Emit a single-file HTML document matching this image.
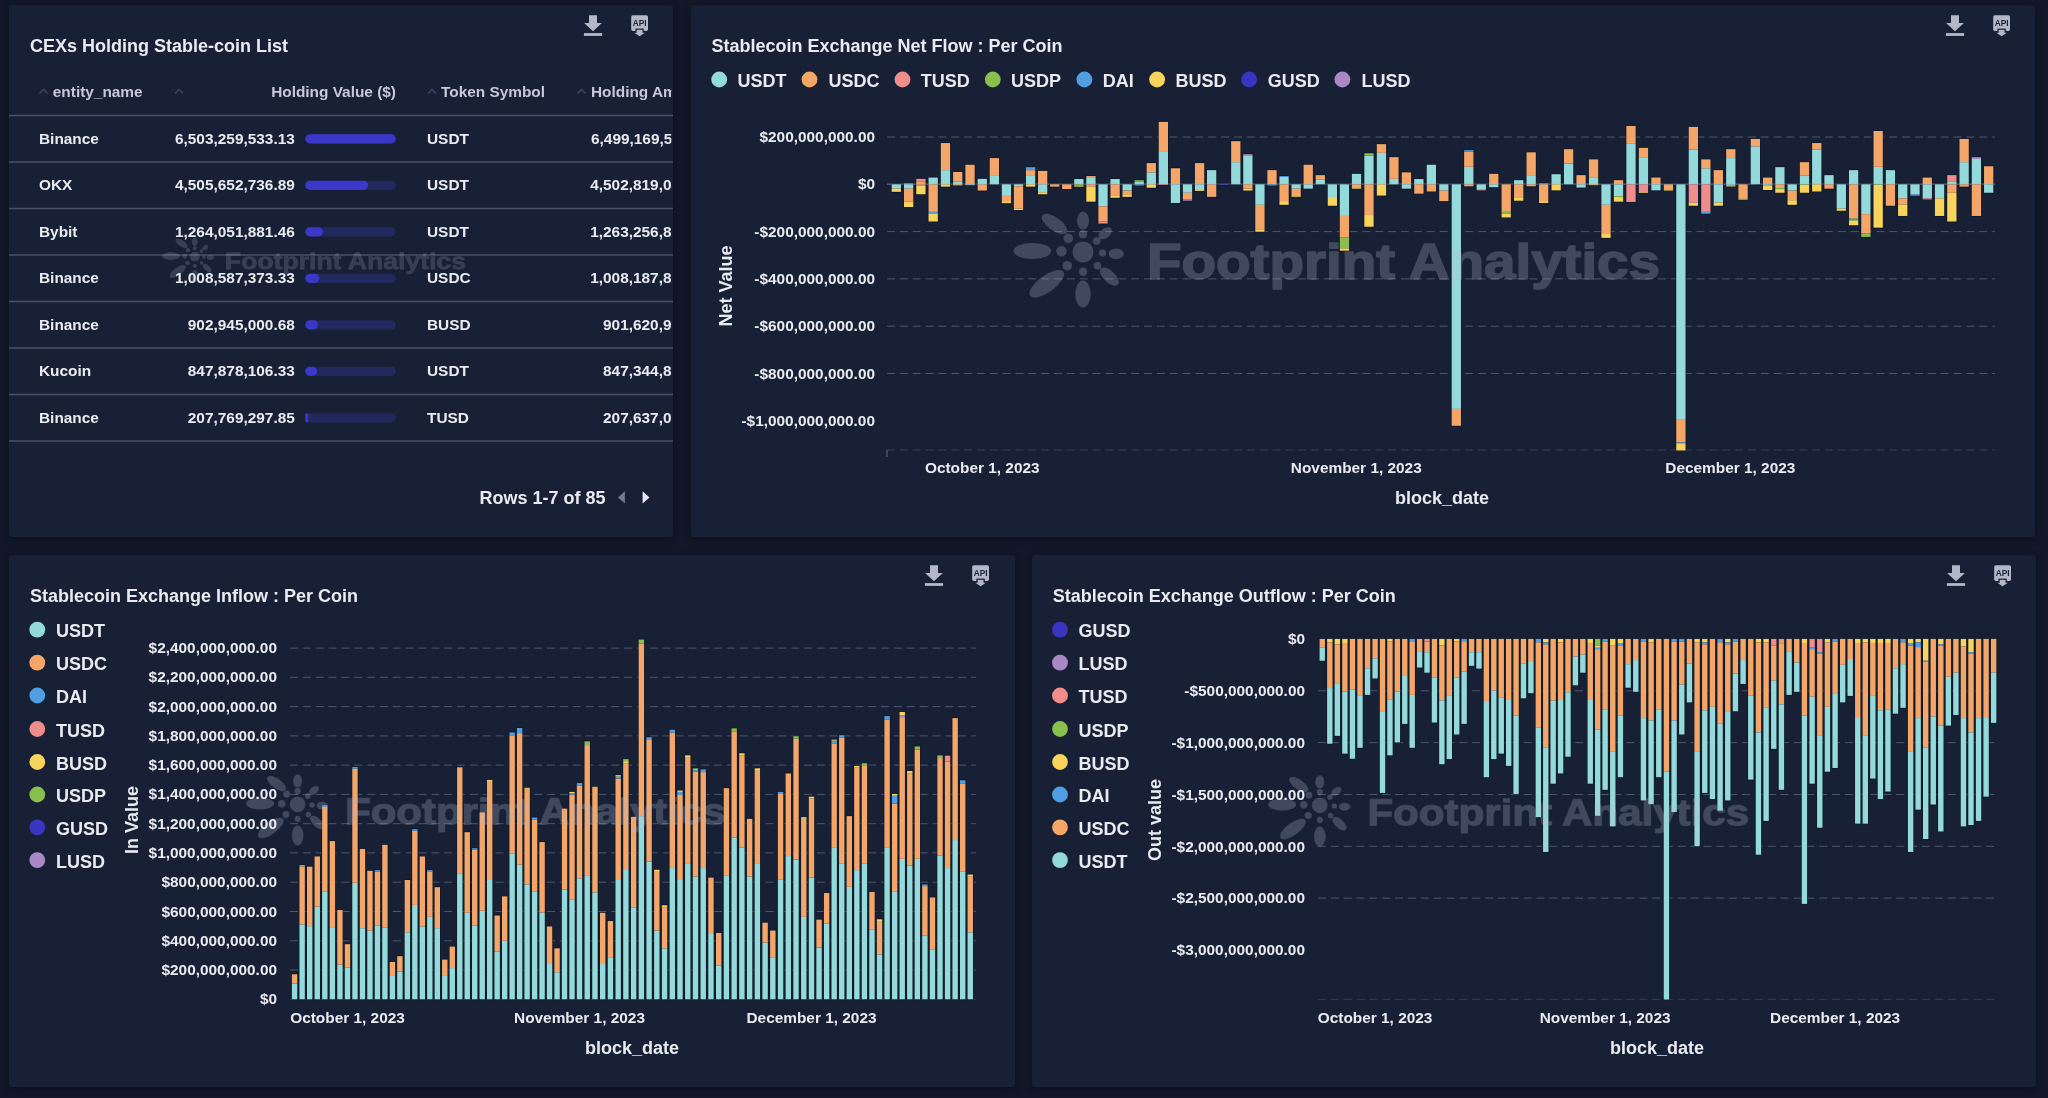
<!DOCTYPE html>
<html><head><meta charset="utf-8"><title>Stablecoin Exchange Dashboard</title>
<style>
html,body{margin:0;padding:0;background:#121829;}
body{width:2048px;height:1098px;overflow:hidden;position:relative;font-family:"Liberation Sans",sans-serif;}
.card{position:absolute;background:#182035;border-radius:3px;box-shadow:0 2px 6px rgba(8,11,22,0.6);}
svg{position:absolute;left:0;top:0;will-change:transform;}
svg text{font-family:"Liberation Sans",sans-serif;font-weight:bold;}
</style></head><body>
<div class="card" style="left:9px;top:5px;width:664px;height:532px"></div>
<div class="card" style="left:691px;top:5px;width:1344px;height:532px"></div>
<div class="card" style="left:9px;top:555px;width:1006px;height:532px"></div>
<div class="card" style="left:1032px;top:555px;width:1004px;height:532px"></div>
<svg width="2048" height="1098" viewBox="0 0 2048 1098">
<g id="table"><clipPath id="c1"><rect x="9" y="5" width="662.4" height="532"/></clipPath><g clip-path="url(#c1)"><path d="M39.5,93.5 l4,-4 l4,4" fill="none" stroke="#3A435B" stroke-width="1.7"/><path d="M175,93.5 l4,-4 l4,4" fill="none" stroke="#3A435B" stroke-width="1.7"/><path d="M428,93.5 l4,-4 l4,4" fill="none" stroke="#3A435B" stroke-width="1.7"/><path d="M577.5,93.5 l4,-4 l4,4" fill="none" stroke="#3A435B" stroke-width="1.7"/><text x="52.8" y="97" font-size="15.4" text-anchor="start" fill="#C5C9D8">entity_name</text><text x="396" y="97" font-size="15.4" text-anchor="end" fill="#C5C9D8">Holding Value ($)</text><text x="441" y="97" font-size="15.4" text-anchor="start" fill="#C5C9D8">Token Symbol</text><text x="591" y="97" font-size="15.4" text-anchor="start" fill="#C5C9D8">Holding Amount</text><text x="39" y="143.8" font-size="15.4" text-anchor="start" fill="#E9EBF1">Binance</text><text x="294.8" y="143.8" font-size="15.4" text-anchor="end" fill="#E9EBF1">6,503,259,533.13</text><rect x="305.3" y="134.2" width="90.5" height="9.2" rx="4.6" fill="#22295F"/><rect x="305.3" y="134.2" width="90.5" height="9.2" rx="4.6" fill="#3B37C9"/><text x="427" y="143.8" font-size="15.4" text-anchor="start" fill="#E9EBF1">USDT</text><text x="710" y="143.8" font-size="15.4" text-anchor="end" fill="#E9EBF1">6,499,169,577.11</text><text x="39" y="190.3" font-size="15.4" text-anchor="start" fill="#E9EBF1">OKX</text><text x="294.8" y="190.3" font-size="15.4" text-anchor="end" fill="#E9EBF1">4,505,652,736.89</text><rect x="305.3" y="180.7" width="90.5" height="9.2" rx="4.6" fill="#22295F"/><rect x="305.3" y="180.7" width="62.7" height="9.2" rx="4.6" fill="#3B37C9"/><text x="427" y="190.3" font-size="15.4" text-anchor="start" fill="#E9EBF1">USDT</text><text x="710" y="190.3" font-size="15.4" text-anchor="end" fill="#E9EBF1">4,502,819,046.72</text><text x="39" y="236.8" font-size="15.4" text-anchor="start" fill="#E9EBF1">Bybit</text><text x="294.8" y="236.8" font-size="15.4" text-anchor="end" fill="#E9EBF1">1,264,051,881.46</text><rect x="305.3" y="227.2" width="90.5" height="9.2" rx="4.6" fill="#22295F"/><rect x="305.3" y="227.2" width="17.6" height="9.2" rx="4.6" fill="#3B37C9"/><text x="427" y="236.8" font-size="15.4" text-anchor="start" fill="#E9EBF1">USDT</text><text x="710" y="236.8" font-size="15.4" text-anchor="end" fill="#E9EBF1">1,263,256,871.30</text><text x="39" y="283.3" font-size="15.4" text-anchor="start" fill="#E9EBF1">Binance</text><text x="294.8" y="283.3" font-size="15.4" text-anchor="end" fill="#E9EBF1">1,008,587,373.33</text><rect x="305.3" y="273.7" width="90.5" height="9.2" rx="4.6" fill="#22295F"/><rect x="305.3" y="273.7" width="14.0" height="9.2" rx="4.6" fill="#3B37C9"/><text x="427" y="283.3" font-size="15.4" text-anchor="start" fill="#E9EBF1">USDC</text><text x="710" y="283.3" font-size="15.4" text-anchor="end" fill="#E9EBF1">1,008,187,853.20</text><text x="39" y="329.8" font-size="15.4" text-anchor="start" fill="#E9EBF1">Binance</text><text x="294.8" y="329.8" font-size="15.4" text-anchor="end" fill="#E9EBF1">902,945,000.68</text><rect x="305.3" y="320.2" width="90.5" height="9.2" rx="4.6" fill="#22295F"/><rect x="305.3" y="320.2" width="12.6" height="9.2" rx="4.6" fill="#3B37C9"/><text x="427" y="329.8" font-size="15.4" text-anchor="start" fill="#E9EBF1">BUSD</text><text x="710" y="329.8" font-size="15.4" text-anchor="end" fill="#E9EBF1">901,620,973.41</text><text x="39" y="376.3" font-size="15.4" text-anchor="start" fill="#E9EBF1">Kucoin</text><text x="294.8" y="376.3" font-size="15.4" text-anchor="end" fill="#E9EBF1">847,878,106.33</text><rect x="305.3" y="366.7" width="90.5" height="9.2" rx="4.6" fill="#22295F"/><rect x="305.3" y="366.7" width="11.8" height="9.2" rx="4.6" fill="#3B37C9"/><text x="427" y="376.3" font-size="15.4" text-anchor="start" fill="#E9EBF1">USDT</text><text x="710" y="376.3" font-size="15.4" text-anchor="end" fill="#E9EBF1">847,344,823.55</text><text x="39" y="422.8" font-size="15.4" text-anchor="start" fill="#E9EBF1">Binance</text><text x="294.8" y="422.8" font-size="15.4" text-anchor="end" fill="#E9EBF1">207,769,297.85</text><rect x="305.3" y="413.2" width="90.5" height="9.2" rx="4.6" fill="#22295F"/><rect x="305.3" y="413.2" width="2.9" height="9.2" rx="1.4" fill="#3B37C9"/><text x="427" y="422.8" font-size="15.4" text-anchor="start" fill="#E9EBF1">TUSD</text><text x="710" y="422.8" font-size="15.4" text-anchor="end" fill="#E9EBF1">207,637,016.92</text></g><line x1="9" x2="673" y1="115.6" y2="115.6" stroke="#48516A" stroke-width="1.5"/><line x1="9" x2="673" y1="162.1" y2="162.1" stroke="#48516A" stroke-width="1.5"/><line x1="9" x2="673" y1="208.6" y2="208.6" stroke="#48516A" stroke-width="1.5"/><line x1="9" x2="673" y1="255.1" y2="255.1" stroke="#48516A" stroke-width="1.5"/><line x1="9" x2="673" y1="301.6" y2="301.6" stroke="#48516A" stroke-width="1.5"/><line x1="9" x2="673" y1="348.1" y2="348.1" stroke="#48516A" stroke-width="1.5"/><line x1="9" x2="673" y1="394.6" y2="394.6" stroke="#48516A" stroke-width="1.5"/><line x1="9" x2="673" y1="441.1" y2="441.1" stroke="#48516A" stroke-width="1.5"/><text x="479.5" y="503.8" font-size="18" text-anchor="start" fill="#E9EBF1">Rows 1-7 of 85</text><path d="M624.9,491.2 v12.4 l-6.9,-6.2 z" fill="#737B93"/><path d="M642.6,491.2 v12.4 l6.9,-6.2 z" fill="#E4E7EF"/></g>
<g id="charts"><line x1="887" y1="137.0" x2="1995" y2="137.0" stroke="#4C566D" stroke-width="1.0" stroke-dasharray="8 4.85" opacity="1"/><line x1="887" y1="184.3" x2="1995" y2="184.3" stroke="#4C566D" stroke-width="1.0" stroke-dasharray="8 4.85" opacity="1"/><line x1="887" y1="231.6" x2="1995" y2="231.6" stroke="#4C566D" stroke-width="1.0" stroke-dasharray="8 4.85" opacity="1"/><line x1="887" y1="278.9" x2="1995" y2="278.9" stroke="#4C566D" stroke-width="1.0" stroke-dasharray="8 4.85" opacity="1"/><line x1="887" y1="326.2" x2="1995" y2="326.2" stroke="#4C566D" stroke-width="1.0" stroke-dasharray="8 4.85" opacity="1"/><line x1="887" y1="373.5" x2="1995" y2="373.5" stroke="#4C566D" stroke-width="1.0" stroke-dasharray="8 4.85" opacity="1"/><line x1="887" y1="450.0" x2="1995" y2="450.0" stroke="#363F55" stroke-width="1.0" stroke-dasharray="8 4.85" opacity="1"/><line x1="887" y1="450" x2="887" y2="457" stroke="#4C566D" stroke-width="1.4"/><rect x="891.69" y="184.30" width="9.30" height="7.54" fill="none" stroke="#0B1525" stroke-width="1.5" stroke-opacity="0.75"/><rect x="903.97" y="183.49" width="9.30" height="23.56" fill="none" stroke="#0B1525" stroke-width="1.5" stroke-opacity="0.75"/><rect x="916.25" y="178.85" width="9.30" height="15.40" fill="none" stroke="#0B1525" stroke-width="1.5" stroke-opacity="0.75"/><rect x="928.53" y="177.55" width="9.30" height="43.97" fill="none" stroke="#0B1525" stroke-width="1.5" stroke-opacity="0.75"/><rect x="940.81" y="143.04" width="9.30" height="43.60" fill="none" stroke="#0B1525" stroke-width="1.5" stroke-opacity="0.75"/><rect x="953.09" y="171.99" width="9.30" height="13.36" fill="none" stroke="#0B1525" stroke-width="1.5" stroke-opacity="0.75"/><rect x="965.37" y="164.75" width="9.30" height="20.41" fill="none" stroke="#0B1525" stroke-width="1.5" stroke-opacity="0.75"/><rect x="977.65" y="178.85" width="9.30" height="11.69" fill="none" stroke="#0B1525" stroke-width="1.5" stroke-opacity="0.75"/><rect x="989.72" y="158.07" width="9.30" height="26.23" fill="none" stroke="#0B1525" stroke-width="1.5" stroke-opacity="0.75"/><rect x="1001.79" y="184.30" width="9.30" height="18.85" fill="none" stroke="#0B1525" stroke-width="1.5" stroke-opacity="0.75"/><rect x="1013.86" y="184.30" width="9.30" height="25.72" fill="none" stroke="#0B1525" stroke-width="1.5" stroke-opacity="0.75"/><rect x="1025.93" y="167.16" width="9.30" height="19.48" fill="none" stroke="#0B1525" stroke-width="1.5" stroke-opacity="0.75"/><rect x="1038.00" y="170.87" width="9.30" height="23.38" fill="none" stroke="#0B1525" stroke-width="1.5" stroke-opacity="0.75"/><rect x="1050.08" y="184.30" width="9.30" height="2.34" fill="none" stroke="#0B1525" stroke-width="1.5" stroke-opacity="0.75"/><rect x="1062.15" y="184.30" width="9.30" height="4.75" fill="none" stroke="#0B1525" stroke-width="1.5" stroke-opacity="0.75"/><rect x="1074.22" y="179.04" width="9.30" height="7.61" fill="none" stroke="#0B1525" stroke-width="1.5" stroke-opacity="0.75"/><rect x="1086.29" y="176.07" width="9.30" height="25.60" fill="none" stroke="#0B1525" stroke-width="1.5" stroke-opacity="0.75"/><rect x="1098.36" y="184.30" width="9.30" height="39.26" fill="none" stroke="#0B1525" stroke-width="1.5" stroke-opacity="0.75"/><rect x="1110.43" y="179.04" width="9.30" height="18.74" fill="none" stroke="#0B1525" stroke-width="1.5" stroke-opacity="0.75"/><rect x="1122.50" y="184.30" width="9.30" height="12.55" fill="none" stroke="#0B1525" stroke-width="1.5" stroke-opacity="0.75"/><rect x="1134.57" y="180.15" width="9.30" height="5.38" fill="none" stroke="#0B1525" stroke-width="1.5" stroke-opacity="0.75"/><rect x="1146.64" y="163.08" width="9.30" height="24.68" fill="none" stroke="#0B1525" stroke-width="1.5" stroke-opacity="0.75"/><rect x="1158.71" y="121.89" width="9.30" height="63.08" fill="none" stroke="#0B1525" stroke-width="1.5" stroke-opacity="0.75"/><rect x="1170.79" y="168.27" width="9.30" height="34.69" fill="none" stroke="#0B1525" stroke-width="1.5" stroke-opacity="0.75"/><rect x="1182.86" y="184.30" width="9.30" height="16.44" fill="none" stroke="#0B1525" stroke-width="1.5" stroke-opacity="0.75"/><rect x="1194.93" y="163.08" width="9.30" height="27.83" fill="none" stroke="#0B1525" stroke-width="1.5" stroke-opacity="0.75"/><rect x="1207.00" y="170.13" width="9.30" height="26.72" fill="none" stroke="#0B1525" stroke-width="1.5" stroke-opacity="0.75"/><rect x="1219.07" y="184.30" width="9.30" height="0.86" fill="none" stroke="#0B1525" stroke-width="1.5" stroke-opacity="0.75"/><rect x="1231.14" y="141.19" width="9.30" height="43.11" fill="none" stroke="#0B1525" stroke-width="1.5" stroke-opacity="0.75"/><rect x="1243.21" y="154.17" width="9.30" height="36.36" fill="none" stroke="#0B1525" stroke-width="1.5" stroke-opacity="0.75"/><rect x="1255.28" y="184.30" width="9.30" height="47.43" fill="none" stroke="#0B1525" stroke-width="1.5" stroke-opacity="0.75"/><rect x="1267.35" y="170.13" width="9.30" height="15.40" fill="none" stroke="#0B1525" stroke-width="1.5" stroke-opacity="0.75"/><rect x="1279.42" y="176.07" width="9.30" height="28.76" fill="none" stroke="#0B1525" stroke-width="1.5" stroke-opacity="0.75"/><rect x="1291.50" y="184.30" width="9.30" height="12.55" fill="none" stroke="#0B1525" stroke-width="1.5" stroke-opacity="0.75"/><rect x="1303.57" y="164.75" width="9.30" height="23.93" fill="none" stroke="#0B1525" stroke-width="1.5" stroke-opacity="0.75"/><rect x="1315.64" y="175.14" width="9.30" height="9.16" fill="none" stroke="#0B1525" stroke-width="1.5" stroke-opacity="0.75"/><rect x="1327.71" y="184.30" width="9.30" height="21.45" fill="none" stroke="#0B1525" stroke-width="1.5" stroke-opacity="0.75"/><rect x="1339.78" y="184.30" width="9.30" height="66.35" fill="none" stroke="#0B1525" stroke-width="1.5" stroke-opacity="0.75"/><rect x="1351.85" y="173.84" width="9.30" height="14.84" fill="none" stroke="#0B1525" stroke-width="1.5" stroke-opacity="0.75"/><rect x="1364.33" y="153.25" width="9.30" height="73.47" fill="none" stroke="#0B1525" stroke-width="1.5" stroke-opacity="0.75"/><rect x="1376.80" y="144.16" width="9.30" height="51.39" fill="none" stroke="#0B1525" stroke-width="1.5" stroke-opacity="0.75"/><rect x="1389.28" y="157.14" width="9.30" height="27.16" fill="none" stroke="#0B1525" stroke-width="1.5" stroke-opacity="0.75"/><rect x="1401.76" y="172.36" width="9.30" height="16.33" fill="none" stroke="#0B1525" stroke-width="1.5" stroke-opacity="0.75"/><rect x="1414.23" y="179.04" width="9.30" height="14.66" fill="none" stroke="#0B1525" stroke-width="1.5" stroke-opacity="0.75"/><rect x="1426.71" y="164.75" width="9.30" height="26.72" fill="none" stroke="#0B1525" stroke-width="1.5" stroke-opacity="0.75"/><rect x="1439.19" y="184.30" width="9.30" height="16.81" fill="none" stroke="#0B1525" stroke-width="1.5" stroke-opacity="0.75"/><rect x="1451.66" y="184.30" width="9.30" height="241.49" fill="none" stroke="#0B1525" stroke-width="1.5" stroke-opacity="0.75"/><rect x="1464.14" y="150.09" width="9.30" height="36.18" fill="none" stroke="#0B1525" stroke-width="1.5" stroke-opacity="0.75"/><rect x="1476.62" y="184.30" width="9.30" height="6.05" fill="none" stroke="#0B1525" stroke-width="1.5" stroke-opacity="0.75"/><rect x="1489.09" y="173.84" width="9.30" height="13.36" fill="none" stroke="#0B1525" stroke-width="1.5" stroke-opacity="0.75"/><rect x="1501.57" y="184.30" width="9.30" height="33.14" fill="none" stroke="#0B1525" stroke-width="1.5" stroke-opacity="0.75"/><rect x="1514.05" y="180.15" width="9.30" height="20.59" fill="none" stroke="#0B1525" stroke-width="1.5" stroke-opacity="0.75"/><rect x="1526.52" y="152.32" width="9.30" height="33.95" fill="none" stroke="#0B1525" stroke-width="1.5" stroke-opacity="0.75"/><rect x="1539.00" y="183.30" width="9.30" height="19.67" fill="none" stroke="#0B1525" stroke-width="1.5" stroke-opacity="0.75"/><rect x="1551.48" y="174.21" width="9.30" height="16.14" fill="none" stroke="#0B1525" stroke-width="1.5" stroke-opacity="0.75"/><rect x="1563.95" y="149.17" width="9.30" height="35.13" fill="none" stroke="#0B1525" stroke-width="1.5" stroke-opacity="0.75"/><rect x="1576.43" y="175.14" width="9.30" height="12.43" fill="none" stroke="#0B1525" stroke-width="1.5" stroke-opacity="0.75"/><rect x="1588.91" y="159.37" width="9.30" height="25.79" fill="none" stroke="#0B1525" stroke-width="1.5" stroke-opacity="0.75"/><rect x="1601.38" y="184.30" width="9.30" height="53.55" fill="none" stroke="#0B1525" stroke-width="1.5" stroke-opacity="0.75"/><rect x="1613.86" y="180.15" width="9.30" height="21.52" fill="none" stroke="#0B1525" stroke-width="1.5" stroke-opacity="0.75"/><rect x="1626.34" y="125.97" width="9.30" height="75.88" fill="none" stroke="#0B1525" stroke-width="1.5" stroke-opacity="0.75"/><rect x="1638.81" y="147.87" width="9.30" height="45.08" fill="none" stroke="#0B1525" stroke-width="1.5" stroke-opacity="0.75"/><rect x="1651.29" y="177.55" width="9.30" height="12.80" fill="none" stroke="#0B1525" stroke-width="1.5" stroke-opacity="0.75"/><rect x="1663.77" y="184.30" width="9.30" height="6.24" fill="none" stroke="#0B1525" stroke-width="1.5" stroke-opacity="0.75"/><rect x="1676.24" y="184.30" width="9.30" height="266.16" fill="none" stroke="#0B1525" stroke-width="1.5" stroke-opacity="0.75"/><rect x="1688.72" y="126.90" width="9.30" height="78.85" fill="none" stroke="#0B1525" stroke-width="1.5" stroke-opacity="0.75"/><rect x="1701.20" y="159.37" width="9.30" height="54.36" fill="none" stroke="#0B1525" stroke-width="1.5" stroke-opacity="0.75"/><rect x="1713.67" y="170.13" width="9.30" height="35.62" fill="none" stroke="#0B1525" stroke-width="1.5" stroke-opacity="0.75"/><rect x="1726.15" y="149.17" width="9.30" height="37.29" fill="none" stroke="#0B1525" stroke-width="1.5" stroke-opacity="0.75"/><rect x="1738.43" y="184.30" width="9.30" height="15.33" fill="none" stroke="#0B1525" stroke-width="1.5" stroke-opacity="0.75"/><rect x="1750.71" y="138.96" width="9.30" height="45.34" fill="none" stroke="#0B1525" stroke-width="1.5" stroke-opacity="0.75"/><rect x="1762.99" y="177.55" width="9.30" height="12.43" fill="none" stroke="#0B1525" stroke-width="1.5" stroke-opacity="0.75"/><rect x="1775.27" y="167.16" width="9.30" height="25.60" fill="none" stroke="#0B1525" stroke-width="1.5" stroke-opacity="0.75"/><rect x="1787.55" y="184.30" width="9.30" height="20.52" fill="none" stroke="#0B1525" stroke-width="1.5" stroke-opacity="0.75"/><rect x="1799.83" y="162.15" width="9.30" height="30.61" fill="none" stroke="#0B1525" stroke-width="1.5" stroke-opacity="0.75"/><rect x="1812.11" y="143.04" width="9.30" height="48.42" fill="none" stroke="#0B1525" stroke-width="1.5" stroke-opacity="0.75"/><rect x="1824.39" y="175.14" width="9.30" height="13.54" fill="none" stroke="#0B1525" stroke-width="1.5" stroke-opacity="0.75"/><rect x="1836.67" y="184.30" width="9.30" height="26.46" fill="none" stroke="#0B1525" stroke-width="1.5" stroke-opacity="0.75"/><rect x="1848.95" y="170.13" width="9.30" height="55.10" fill="none" stroke="#0B1525" stroke-width="1.5" stroke-opacity="0.75"/><rect x="1861.23" y="184.30" width="9.30" height="52.62" fill="none" stroke="#0B1525" stroke-width="1.5" stroke-opacity="0.75"/><rect x="1873.51" y="130.98" width="9.30" height="96.66" fill="none" stroke="#0B1525" stroke-width="1.5" stroke-opacity="0.75"/><rect x="1885.79" y="170.13" width="9.30" height="35.62" fill="none" stroke="#0B1525" stroke-width="1.5" stroke-opacity="0.75"/><rect x="1898.07" y="184.30" width="9.30" height="31.66" fill="none" stroke="#0B1525" stroke-width="1.5" stroke-opacity="0.75"/><rect x="1910.35" y="184.30" width="9.30" height="11.43" fill="none" stroke="#0B1525" stroke-width="1.5" stroke-opacity="0.75"/><rect x="1922.63" y="177.55" width="9.30" height="21.89" fill="none" stroke="#0B1525" stroke-width="1.5" stroke-opacity="0.75"/><rect x="1934.91" y="184.30" width="9.30" height="31.66" fill="none" stroke="#0B1525" stroke-width="1.5" stroke-opacity="0.75"/><rect x="1947.19" y="175.14" width="9.30" height="46.38" fill="none" stroke="#0B1525" stroke-width="1.5" stroke-opacity="0.75"/><rect x="1959.47" y="138.96" width="9.30" height="47.68" fill="none" stroke="#0B1525" stroke-width="1.5" stroke-opacity="0.75"/><rect x="1971.75" y="157.14" width="9.30" height="58.81" fill="none" stroke="#0B1525" stroke-width="1.5" stroke-opacity="0.75"/><rect x="1984.03" y="166.23" width="9.30" height="26.53" fill="none" stroke="#0B1525" stroke-width="1.5" stroke-opacity="0.75"/><rect x="891.69" y="184.30" width="9.30" height="4.38" fill="#94DADA"/><rect x="891.69" y="188.68" width="9.30" height="3.15" fill="#F9D45C"/><rect x="903.97" y="183.49" width="9.30" height="0.81" fill="#94DADA"/><rect x="903.97" y="184.30" width="9.30" height="4.38" fill="#94DADA"/><rect x="903.97" y="188.68" width="9.30" height="12.99" fill="#F4A568"/><rect x="903.97" y="201.67" width="9.30" height="5.38" fill="#F9D45C"/><rect x="916.25" y="181.26" width="9.30" height="3.04" fill="#F4A568"/><rect x="916.25" y="178.85" width="9.30" height="2.41" fill="#EF8C8C"/><rect x="916.25" y="184.30" width="9.30" height="1.41" fill="#F4A568"/><rect x="916.25" y="185.71" width="9.30" height="8.53" fill="#F9D45C"/><rect x="928.53" y="177.55" width="9.30" height="6.75" fill="#94DADA"/><rect x="928.53" y="184.30" width="9.30" height="27.57" fill="#F4A568"/><rect x="928.53" y="211.87" width="9.30" height="1.67" fill="#509EE3"/><rect x="928.53" y="213.54" width="9.30" height="7.98" fill="#F9D45C"/><rect x="940.81" y="170.13" width="9.30" height="14.17" fill="#94DADA"/><rect x="940.81" y="143.04" width="9.30" height="27.09" fill="#F4A568"/><rect x="940.81" y="184.30" width="9.30" height="2.34" fill="#F9D45C"/><rect x="953.09" y="181.63" width="9.30" height="2.67" fill="#94DADA"/><rect x="953.09" y="171.99" width="9.30" height="9.65" fill="#F4A568"/><rect x="953.09" y="184.30" width="9.30" height="1.04" fill="#F9D45C"/><rect x="965.37" y="164.75" width="9.30" height="19.55" fill="#F4A568"/><rect x="965.37" y="184.30" width="9.30" height="0.86" fill="#94DADA"/><rect x="977.65" y="178.85" width="9.30" height="5.45" fill="#94DADA"/><rect x="977.65" y="184.30" width="9.30" height="6.24" fill="#F4A568"/><rect x="989.72" y="175.14" width="9.30" height="9.16" fill="#94DADA"/><rect x="989.72" y="158.07" width="9.30" height="17.07" fill="#F4A568"/><rect x="1001.79" y="184.30" width="9.30" height="11.62" fill="#94DADA"/><rect x="1001.79" y="195.92" width="9.30" height="5.19" fill="#F4A568"/><rect x="1001.79" y="201.11" width="9.30" height="2.04" fill="#F9D45C"/><rect x="1013.86" y="184.30" width="9.30" height="1.97" fill="#94DADA"/><rect x="1013.86" y="186.27" width="9.30" height="22.26" fill="#F4A568"/><rect x="1013.86" y="208.53" width="9.30" height="1.48" fill="#F9D45C"/><rect x="1025.93" y="175.14" width="9.30" height="9.16" fill="#94DADA"/><rect x="1025.93" y="170.13" width="9.30" height="5.01" fill="#F4A568"/><rect x="1025.93" y="167.16" width="9.30" height="2.97" fill="#509EE3"/><rect x="1025.93" y="184.30" width="9.30" height="2.34" fill="#F9D45C"/><rect x="1038.00" y="170.87" width="9.30" height="13.43" fill="#F4A568"/><rect x="1038.00" y="184.30" width="9.30" height="7.91" fill="#94DADA"/><rect x="1038.00" y="192.21" width="9.30" height="2.04" fill="#F9D45C"/><rect x="1050.08" y="184.30" width="9.30" height="2.34" fill="#F4A568"/><rect x="1062.15" y="184.30" width="9.30" height="4.75" fill="#F4A568"/><rect x="1074.22" y="179.04" width="9.30" height="5.26" fill="#94DADA"/><rect x="1074.22" y="184.30" width="9.30" height="1.23" fill="#88BF4D"/><rect x="1074.22" y="185.53" width="9.30" height="1.11" fill="#F9D45C"/><rect x="1086.29" y="177.92" width="9.30" height="6.38" fill="#94DADA"/><rect x="1086.29" y="176.07" width="9.30" height="1.86" fill="#F4A568"/><rect x="1086.29" y="184.30" width="9.30" height="2.53" fill="#F4A568"/><rect x="1086.29" y="186.83" width="9.30" height="14.84" fill="#F9D45C"/><rect x="1098.36" y="184.30" width="9.30" height="22.01" fill="#94DADA"/><rect x="1098.36" y="206.31" width="9.30" height="15.21" fill="#F4A568"/><rect x="1098.36" y="221.52" width="9.30" height="2.04" fill="#EF8C8C"/><rect x="1110.43" y="179.04" width="9.30" height="5.26" fill="#94DADA"/><rect x="1110.43" y="184.30" width="9.30" height="11.62" fill="#F4A568"/><rect x="1110.43" y="195.92" width="9.30" height="1.86" fill="#F9D45C"/><rect x="1122.50" y="184.30" width="9.30" height="6.24" fill="#94DADA"/><rect x="1122.50" y="190.54" width="9.30" height="3.71" fill="#F4A568"/><rect x="1122.50" y="194.25" width="9.30" height="2.60" fill="#F9D45C"/><rect x="1134.57" y="181.63" width="9.30" height="2.67" fill="#94DADA"/><rect x="1134.57" y="180.15" width="9.30" height="1.48" fill="#88BF4D"/><rect x="1134.57" y="184.30" width="9.30" height="1.23" fill="#509EE3"/><rect x="1146.64" y="172.36" width="9.30" height="11.94" fill="#94DADA"/><rect x="1146.64" y="163.08" width="9.30" height="9.28" fill="#F4A568"/><rect x="1146.64" y="184.30" width="9.30" height="3.46" fill="#F9D45C"/><rect x="1158.71" y="151.95" width="9.30" height="32.35" fill="#94DADA"/><rect x="1158.71" y="121.89" width="9.30" height="30.06" fill="#F4A568"/><rect x="1158.71" y="184.30" width="9.30" height="0.67" fill="#EF8C8C"/><rect x="1170.79" y="168.27" width="9.30" height="16.03" fill="#F4A568"/><rect x="1170.79" y="184.30" width="9.30" height="18.67" fill="#94DADA"/><rect x="1182.86" y="184.30" width="9.30" height="8.46" fill="#94DADA"/><rect x="1182.86" y="192.76" width="9.30" height="6.86" fill="#F4A568"/><rect x="1182.86" y="199.63" width="9.30" height="1.11" fill="#A989C5"/><rect x="1194.93" y="163.08" width="9.30" height="21.22" fill="#F4A568"/><rect x="1194.93" y="184.30" width="9.30" height="5.68" fill="#94DADA"/><rect x="1194.93" y="189.98" width="9.30" height="0.93" fill="#F9D45C"/><rect x="1207.00" y="170.13" width="9.30" height="14.17" fill="#94DADA"/><rect x="1207.00" y="184.30" width="9.30" height="12.55" fill="#F4A568"/><rect x="1219.07" y="184.30" width="9.30" height="0.86" fill="#3A35C0"/><rect x="1231.14" y="162.15" width="9.30" height="22.15" fill="#94DADA"/><rect x="1231.14" y="141.19" width="9.30" height="20.96" fill="#F4A568"/><rect x="1243.21" y="155.29" width="9.30" height="29.01" fill="#94DADA"/><rect x="1243.21" y="154.17" width="9.30" height="1.11" fill="#A989C5"/><rect x="1243.21" y="184.30" width="9.30" height="4.38" fill="#F4A568"/><rect x="1243.21" y="188.68" width="9.30" height="1.86" fill="#F9D45C"/><rect x="1255.28" y="184.30" width="9.30" height="20.52" fill="#94DADA"/><rect x="1255.28" y="204.82" width="9.30" height="24.49" fill="#F4A568"/><rect x="1255.28" y="229.31" width="9.30" height="2.41" fill="#F9D45C"/><rect x="1267.35" y="170.13" width="9.30" height="14.17" fill="#F4A568"/><rect x="1267.35" y="184.30" width="9.30" height="1.23" fill="#509EE3"/><rect x="1279.42" y="176.99" width="9.30" height="7.31" fill="#94DADA"/><rect x="1279.42" y="176.07" width="9.30" height="0.93" fill="#509EE3"/><rect x="1279.42" y="184.30" width="9.30" height="16.81" fill="#F4A568"/><rect x="1279.42" y="201.11" width="9.30" height="3.71" fill="#F9D45C"/><rect x="1291.50" y="184.30" width="9.30" height="4.38" fill="#94DADA"/><rect x="1291.50" y="188.68" width="9.30" height="7.42" fill="#F4A568"/><rect x="1291.50" y="196.10" width="9.30" height="0.74" fill="#F9D45C"/><rect x="1303.57" y="164.75" width="9.30" height="19.55" fill="#F4A568"/><rect x="1303.57" y="184.30" width="9.30" height="4.38" fill="#94DADA"/><rect x="1315.64" y="179.78" width="9.30" height="4.52" fill="#94DADA"/><rect x="1315.64" y="175.14" width="9.30" height="4.64" fill="#F4A568"/><rect x="1327.71" y="184.30" width="9.30" height="12.73" fill="#94DADA"/><rect x="1327.71" y="197.03" width="9.30" height="8.72" fill="#F9D45C"/><rect x="1339.78" y="184.30" width="9.30" height="31.66" fill="#94DADA"/><rect x="1339.78" y="215.96" width="9.30" height="21.34" fill="#F4A568"/><rect x="1339.78" y="237.29" width="9.30" height="11.13" fill="#88BF4D"/><rect x="1339.78" y="248.42" width="9.30" height="2.23" fill="#F9D45C"/><rect x="1351.85" y="173.84" width="9.30" height="10.46" fill="#94DADA"/><rect x="1351.85" y="184.30" width="9.30" height="2.90" fill="#F4A568"/><rect x="1351.85" y="187.20" width="9.30" height="1.48" fill="#F9D45C"/><rect x="1364.33" y="155.66" width="9.30" height="28.64" fill="#94DADA"/><rect x="1364.33" y="153.25" width="9.30" height="2.41" fill="#88BF4D"/><rect x="1364.33" y="184.30" width="9.30" height="30.73" fill="#F4A568"/><rect x="1364.33" y="215.03" width="9.30" height="11.69" fill="#F9D45C"/><rect x="1376.80" y="152.88" width="9.30" height="31.42" fill="#94DADA"/><rect x="1376.80" y="144.16" width="9.30" height="8.72" fill="#F4A568"/><rect x="1376.80" y="184.30" width="9.30" height="11.25" fill="#F9D45C"/><rect x="1389.28" y="178.85" width="9.30" height="5.45" fill="#94DADA"/><rect x="1389.28" y="157.14" width="9.30" height="21.71" fill="#F4A568"/><rect x="1401.76" y="172.36" width="9.30" height="11.94" fill="#F4A568"/><rect x="1401.76" y="184.30" width="9.30" height="4.38" fill="#94DADA"/><rect x="1414.23" y="179.04" width="9.30" height="5.26" fill="#94DADA"/><rect x="1414.23" y="184.30" width="9.30" height="9.39" fill="#F4A568"/><rect x="1426.71" y="164.75" width="9.30" height="19.55" fill="#94DADA"/><rect x="1426.71" y="184.30" width="9.30" height="7.17" fill="#F4A568"/><rect x="1439.19" y="184.30" width="9.30" height="6.24" fill="#94DADA"/><rect x="1439.19" y="190.54" width="9.30" height="10.58" fill="#F4A568"/><rect x="1451.66" y="184.30" width="9.30" height="224.61" fill="#94DADA"/><rect x="1451.66" y="408.91" width="9.30" height="16.88" fill="#F4A568"/><rect x="1464.14" y="166.79" width="9.30" height="17.51" fill="#94DADA"/><rect x="1464.14" y="151.58" width="9.30" height="15.21" fill="#F4A568"/><rect x="1464.14" y="150.09" width="9.30" height="1.48" fill="#509EE3"/><rect x="1464.14" y="184.30" width="9.30" height="1.97" fill="#F4A568"/><rect x="1476.62" y="184.30" width="9.30" height="4.75" fill="#94DADA"/><rect x="1476.62" y="189.05" width="9.30" height="1.30" fill="#EF8C8C"/><rect x="1489.09" y="173.84" width="9.30" height="10.46" fill="#F4A568"/><rect x="1489.09" y="184.30" width="9.30" height="2.90" fill="#94DADA"/><rect x="1501.57" y="184.30" width="9.30" height="27.57" fill="#F4A568"/><rect x="1501.57" y="211.87" width="9.30" height="1.67" fill="#88BF4D"/><rect x="1501.57" y="213.54" width="9.30" height="3.90" fill="#F9D45C"/><rect x="1514.05" y="180.15" width="9.30" height="4.15" fill="#94DADA"/><rect x="1514.05" y="184.30" width="9.30" height="13.66" fill="#F4A568"/><rect x="1514.05" y="197.96" width="9.30" height="2.78" fill="#F9D45C"/><rect x="1526.52" y="175.14" width="9.30" height="9.16" fill="#94DADA"/><rect x="1526.52" y="152.32" width="9.30" height="22.82" fill="#F4A568"/><rect x="1526.52" y="184.30" width="9.30" height="1.97" fill="#F4A568"/><rect x="1539.00" y="183.30" width="9.30" height="1.00" fill="#509EE3"/><rect x="1539.00" y="184.30" width="9.30" height="16.81" fill="#F4A568"/><rect x="1539.00" y="201.11" width="9.30" height="1.86" fill="#F9D45C"/><rect x="1551.48" y="174.21" width="9.30" height="10.09" fill="#94DADA"/><rect x="1551.48" y="184.30" width="9.30" height="6.05" fill="#F9D45C"/><rect x="1563.95" y="163.45" width="9.30" height="20.85" fill="#94DADA"/><rect x="1563.95" y="149.17" width="9.30" height="14.29" fill="#F4A568"/><rect x="1576.43" y="175.14" width="9.30" height="9.16" fill="#F4A568"/><rect x="1576.43" y="184.30" width="9.30" height="3.27" fill="#94DADA"/><rect x="1588.91" y="177.92" width="9.30" height="6.38" fill="#94DADA"/><rect x="1588.91" y="159.37" width="9.30" height="18.55" fill="#F4A568"/><rect x="1588.91" y="184.30" width="9.30" height="0.86" fill="#F9D45C"/><rect x="1601.38" y="184.30" width="9.30" height="20.52" fill="#94DADA"/><rect x="1601.38" y="204.82" width="9.30" height="28.39" fill="#F4A568"/><rect x="1601.38" y="233.21" width="9.30" height="4.64" fill="#F9D45C"/><rect x="1613.86" y="180.15" width="9.30" height="4.15" fill="#F4A568"/><rect x="1613.86" y="184.30" width="9.30" height="11.80" fill="#94DADA"/><rect x="1613.86" y="196.10" width="9.30" height="0.93" fill="#88BF4D"/><rect x="1613.86" y="197.03" width="9.30" height="4.64" fill="#F9D45C"/><rect x="1626.34" y="143.23" width="9.30" height="41.07" fill="#94DADA"/><rect x="1626.34" y="125.97" width="9.30" height="17.25" fill="#F4A568"/><rect x="1626.34" y="184.30" width="9.30" height="16.81" fill="#EF8C8C"/><rect x="1626.34" y="201.11" width="9.30" height="0.74" fill="#F9D45C"/><rect x="1638.81" y="157.88" width="9.30" height="26.42" fill="#94DADA"/><rect x="1638.81" y="147.87" width="9.30" height="10.02" fill="#F4A568"/><rect x="1638.81" y="184.30" width="9.30" height="7.91" fill="#EF8C8C"/><rect x="1638.81" y="192.21" width="9.30" height="0.74" fill="#F9D45C"/><rect x="1651.29" y="177.55" width="9.30" height="6.75" fill="#F4A568"/><rect x="1651.29" y="184.30" width="9.30" height="6.05" fill="#94DADA"/><rect x="1663.77" y="184.30" width="9.30" height="5.68" fill="#F4A568"/><rect x="1663.77" y="189.98" width="9.30" height="0.56" fill="#F9D45C"/><rect x="1676.24" y="184.30" width="9.30" height="235.55" fill="#94DADA"/><rect x="1676.24" y="419.85" width="9.30" height="22.63" fill="#F4A568"/><rect x="1676.24" y="442.49" width="9.30" height="0.74" fill="#509EE3"/><rect x="1676.24" y="443.23" width="9.30" height="7.24" fill="#F9D45C"/><rect x="1688.72" y="149.72" width="9.30" height="34.58" fill="#94DADA"/><rect x="1688.72" y="126.90" width="9.30" height="22.82" fill="#F4A568"/><rect x="1688.72" y="184.30" width="9.30" height="18.30" fill="#EF8C8C"/><rect x="1688.72" y="202.60" width="9.30" height="3.15" fill="#F9D45C"/><rect x="1701.20" y="168.27" width="9.30" height="16.03" fill="#94DADA"/><rect x="1701.20" y="159.37" width="9.30" height="8.91" fill="#F4A568"/><rect x="1701.20" y="184.30" width="9.30" height="27.57" fill="#EF8C8C"/><rect x="1701.20" y="211.87" width="9.30" height="1.86" fill="#509EE3"/><rect x="1713.67" y="170.13" width="9.30" height="14.17" fill="#F4A568"/><rect x="1713.67" y="184.30" width="9.30" height="18.30" fill="#94DADA"/><rect x="1713.67" y="202.60" width="9.30" height="3.15" fill="#F9D45C"/><rect x="1726.15" y="158.07" width="9.30" height="26.23" fill="#94DADA"/><rect x="1726.15" y="149.17" width="9.30" height="8.91" fill="#F4A568"/><rect x="1726.15" y="184.30" width="9.30" height="1.41" fill="#94DADA"/><rect x="1726.15" y="185.71" width="9.30" height="0.74" fill="#F9D45C"/><rect x="1738.43" y="184.30" width="9.30" height="14.03" fill="#F4A568"/><rect x="1738.43" y="198.33" width="9.30" height="1.30" fill="#F9D45C"/><rect x="1750.71" y="146.38" width="9.30" height="37.92" fill="#94DADA"/><rect x="1750.71" y="138.96" width="9.30" height="7.42" fill="#F4A568"/><rect x="1762.99" y="177.55" width="9.30" height="6.75" fill="#F4A568"/><rect x="1762.99" y="184.30" width="9.30" height="1.23" fill="#94DADA"/><rect x="1762.99" y="185.53" width="9.30" height="4.45" fill="#F9D45C"/><rect x="1775.27" y="167.16" width="9.30" height="17.14" fill="#94DADA"/><rect x="1775.27" y="184.30" width="9.30" height="3.83" fill="#F4A568"/><rect x="1775.27" y="188.13" width="9.30" height="0.93" fill="#88BF4D"/><rect x="1775.27" y="189.05" width="9.30" height="3.71" fill="#F9D45C"/><rect x="1787.55" y="184.30" width="9.30" height="6.24" fill="#94DADA"/><rect x="1787.55" y="190.54" width="9.30" height="9.65" fill="#F4A568"/><rect x="1787.55" y="200.19" width="9.30" height="4.64" fill="#F9D45C"/><rect x="1799.83" y="175.70" width="9.30" height="8.60" fill="#94DADA"/><rect x="1799.83" y="162.15" width="9.30" height="13.54" fill="#F4A568"/><rect x="1799.83" y="184.30" width="9.30" height="0.67" fill="#88BF4D"/><rect x="1799.83" y="184.97" width="9.30" height="7.79" fill="#F9D45C"/><rect x="1812.11" y="149.72" width="9.30" height="34.58" fill="#94DADA"/><rect x="1812.11" y="143.04" width="9.30" height="6.68" fill="#F4A568"/><rect x="1812.11" y="184.30" width="9.30" height="7.17" fill="#F9D45C"/><rect x="1824.39" y="175.14" width="9.30" height="9.16" fill="#94DADA"/><rect x="1824.39" y="184.30" width="9.30" height="4.38" fill="#F4A568"/><rect x="1836.67" y="184.30" width="9.30" height="24.23" fill="#94DADA"/><rect x="1836.67" y="208.53" width="9.30" height="2.23" fill="#F9D45C"/><rect x="1848.95" y="170.13" width="9.30" height="14.17" fill="#94DADA"/><rect x="1848.95" y="184.30" width="9.30" height="34.44" fill="#F4A568"/><rect x="1848.95" y="218.74" width="9.30" height="1.11" fill="#509EE3"/><rect x="1848.95" y="219.85" width="9.30" height="1.11" fill="#88BF4D"/><rect x="1848.95" y="220.96" width="9.30" height="4.27" fill="#F9D45C"/><rect x="1861.23" y="184.30" width="9.30" height="29.80" fill="#94DADA"/><rect x="1861.23" y="214.10" width="9.30" height="19.48" fill="#F4A568"/><rect x="1861.23" y="233.58" width="9.30" height="3.34" fill="#88BF4D"/><rect x="1873.51" y="166.79" width="9.30" height="17.51" fill="#94DADA"/><rect x="1873.51" y="130.98" width="9.30" height="35.81" fill="#F4A568"/><rect x="1873.51" y="184.30" width="9.30" height="0.67" fill="#88BF4D"/><rect x="1873.51" y="184.97" width="9.30" height="42.67" fill="#F9D45C"/><rect x="1885.79" y="170.13" width="9.30" height="14.17" fill="#94DADA"/><rect x="1885.79" y="184.30" width="9.30" height="21.45" fill="#F4A568"/><rect x="1898.07" y="184.30" width="9.30" height="14.03" fill="#94DADA"/><rect x="1898.07" y="198.33" width="9.30" height="6.12" fill="#F4A568"/><rect x="1898.07" y="204.45" width="9.30" height="11.50" fill="#F9D45C"/><rect x="1910.35" y="184.30" width="9.30" height="10.32" fill="#94DADA"/><rect x="1910.35" y="194.62" width="9.30" height="1.11" fill="#509EE3"/><rect x="1922.63" y="177.55" width="9.30" height="6.75" fill="#F4A568"/><rect x="1922.63" y="184.30" width="9.30" height="14.03" fill="#94DADA"/><rect x="1922.63" y="198.33" width="9.30" height="1.11" fill="#EF8C8C"/><rect x="1934.91" y="184.30" width="9.30" height="14.03" fill="#94DADA"/><rect x="1934.91" y="198.33" width="9.30" height="17.63" fill="#F9D45C"/><rect x="1947.19" y="181.26" width="9.30" height="3.04" fill="#94DADA"/><rect x="1947.19" y="175.14" width="9.30" height="6.12" fill="#EF8C8C"/><rect x="1947.19" y="184.30" width="9.30" height="8.46" fill="#F4A568"/><rect x="1947.19" y="192.76" width="9.30" height="28.76" fill="#F9D45C"/><rect x="1959.47" y="162.15" width="9.30" height="22.15" fill="#94DADA"/><rect x="1959.47" y="138.96" width="9.30" height="23.19" fill="#F4A568"/><rect x="1959.47" y="184.30" width="9.30" height="2.34" fill="#F4A568"/><rect x="1971.75" y="159.00" width="9.30" height="25.30" fill="#94DADA"/><rect x="1971.75" y="157.14" width="9.30" height="1.86" fill="#A989C5"/><rect x="1971.75" y="184.30" width="9.30" height="31.66" fill="#F4A568"/><rect x="1984.03" y="166.23" width="9.30" height="18.07" fill="#F4A568"/><rect x="1984.03" y="184.30" width="9.30" height="8.46" fill="#94DADA"/><line x1="887" y1="184.0" x2="1995" y2="184.0" stroke="#AAB2C5" stroke-width="1.0" opacity="0.32"/><line x1="290" y1="970.0" x2="976" y2="970.0" stroke="#4C566D" stroke-width="1.0" stroke-dasharray="8 4.85" opacity="1"/><line x1="290" y1="940.8" x2="976" y2="940.8" stroke="#4C566D" stroke-width="1.0" stroke-dasharray="8 4.85" opacity="1"/><line x1="290" y1="911.5" x2="976" y2="911.5" stroke="#4C566D" stroke-width="1.0" stroke-dasharray="8 4.85" opacity="1"/><line x1="290" y1="882.2" x2="976" y2="882.2" stroke="#4C566D" stroke-width="1.0" stroke-dasharray="8 4.85" opacity="1"/><line x1="290" y1="852.9" x2="976" y2="852.9" stroke="#4C566D" stroke-width="1.0" stroke-dasharray="8 4.85" opacity="1"/><line x1="290" y1="823.7" x2="976" y2="823.7" stroke="#4C566D" stroke-width="1.0" stroke-dasharray="8 4.85" opacity="1"/><line x1="290" y1="794.4" x2="976" y2="794.4" stroke="#4C566D" stroke-width="1.0" stroke-dasharray="8 4.85" opacity="1"/><line x1="290" y1="765.1" x2="976" y2="765.1" stroke="#4C566D" stroke-width="1.0" stroke-dasharray="8 4.85" opacity="1"/><line x1="290" y1="735.9" x2="976" y2="735.9" stroke="#4C566D" stroke-width="1.0" stroke-dasharray="8 4.85" opacity="1"/><line x1="290" y1="706.6" x2="976" y2="706.6" stroke="#4C566D" stroke-width="1.0" stroke-dasharray="8 4.85" opacity="1"/><line x1="290" y1="677.3" x2="976" y2="677.3" stroke="#4C566D" stroke-width="1.0" stroke-dasharray="8 4.85" opacity="1"/><line x1="290" y1="648.1" x2="976" y2="648.1" stroke="#4C566D" stroke-width="1.0" stroke-dasharray="8 4.85" opacity="1"/><line x1="290" y1="999.3" x2="976" y2="999.3" stroke="#363F55" stroke-width="1.0" stroke-dasharray="8 4.85" opacity="1"/><rect x="291.88" y="974.26" width="5.40" height="25.04" fill="none" stroke="#0B1525" stroke-width="1.5" stroke-opacity="0.75"/><rect x="299.44" y="864.97" width="5.40" height="134.33" fill="none" stroke="#0B1525" stroke-width="1.5" stroke-opacity="0.75"/><rect x="307.00" y="866.68" width="5.40" height="132.62" fill="none" stroke="#0B1525" stroke-width="1.5" stroke-opacity="0.75"/><rect x="314.56" y="856.43" width="5.40" height="142.87" fill="none" stroke="#0B1525" stroke-width="1.5" stroke-opacity="0.75"/><rect x="322.12" y="805.20" width="5.40" height="194.10" fill="none" stroke="#0B1525" stroke-width="1.5" stroke-opacity="0.75"/><rect x="329.68" y="841.07" width="5.40" height="158.23" fill="none" stroke="#0B1525" stroke-width="1.5" stroke-opacity="0.75"/><rect x="337.24" y="910.05" width="5.40" height="89.25" fill="none" stroke="#0B1525" stroke-width="1.5" stroke-opacity="0.75"/><rect x="344.80" y="944.21" width="5.40" height="55.09" fill="none" stroke="#0B1525" stroke-width="1.5" stroke-opacity="0.75"/><rect x="352.28" y="766.95" width="5.40" height="232.35" fill="none" stroke="#0B1525" stroke-width="1.5" stroke-opacity="0.75"/><rect x="359.77" y="848.92" width="5.40" height="150.38" fill="none" stroke="#0B1525" stroke-width="1.5" stroke-opacity="0.75"/><rect x="367.25" y="870.78" width="5.40" height="128.52" fill="none" stroke="#0B1525" stroke-width="1.5" stroke-opacity="0.75"/><rect x="374.74" y="870.10" width="5.40" height="129.20" fill="none" stroke="#0B1525" stroke-width="1.5" stroke-opacity="0.75"/><rect x="382.22" y="844.82" width="5.40" height="154.48" fill="none" stroke="#0B1525" stroke-width="1.5" stroke-opacity="0.75"/><rect x="389.70" y="961.97" width="5.40" height="37.33" fill="none" stroke="#0B1525" stroke-width="1.5" stroke-opacity="0.75"/><rect x="397.19" y="956.16" width="5.40" height="43.14" fill="none" stroke="#0B1525" stroke-width="1.5" stroke-opacity="0.75"/><rect x="404.67" y="880.00" width="5.40" height="119.30" fill="none" stroke="#0B1525" stroke-width="1.5" stroke-opacity="0.75"/><rect x="412.15" y="829.11" width="5.40" height="170.19" fill="none" stroke="#0B1525" stroke-width="1.5" stroke-opacity="0.75"/><rect x="419.64" y="856.43" width="5.40" height="142.87" fill="none" stroke="#0B1525" stroke-width="1.5" stroke-opacity="0.75"/><rect x="427.12" y="870.10" width="5.40" height="129.20" fill="none" stroke="#0B1525" stroke-width="1.5" stroke-opacity="0.75"/><rect x="434.61" y="887.17" width="5.40" height="112.13" fill="none" stroke="#0B1525" stroke-width="1.5" stroke-opacity="0.75"/><rect x="442.09" y="959.58" width="5.40" height="39.72" fill="none" stroke="#0B1525" stroke-width="1.5" stroke-opacity="0.75"/><rect x="449.57" y="946.60" width="5.40" height="52.70" fill="none" stroke="#0B1525" stroke-width="1.5" stroke-opacity="0.75"/><rect x="457.06" y="767.30" width="5.40" height="232.00" fill="none" stroke="#0B1525" stroke-width="1.5" stroke-opacity="0.75"/><rect x="464.54" y="832.19" width="5.40" height="167.11" fill="none" stroke="#0B1525" stroke-width="1.5" stroke-opacity="0.75"/><rect x="472.03" y="848.24" width="5.40" height="151.06" fill="none" stroke="#0B1525" stroke-width="1.5" stroke-opacity="0.75"/><rect x="479.51" y="812.38" width="5.40" height="186.92" fill="none" stroke="#0B1525" stroke-width="1.5" stroke-opacity="0.75"/><rect x="486.99" y="779.93" width="5.40" height="219.37" fill="none" stroke="#0B1525" stroke-width="1.5" stroke-opacity="0.75"/><rect x="494.48" y="915.52" width="5.40" height="83.78" fill="none" stroke="#0B1525" stroke-width="1.5" stroke-opacity="0.75"/><rect x="501.96" y="896.39" width="5.40" height="102.91" fill="none" stroke="#0B1525" stroke-width="1.5" stroke-opacity="0.75"/><rect x="509.45" y="732.46" width="5.40" height="266.84" fill="none" stroke="#0B1525" stroke-width="1.5" stroke-opacity="0.75"/><rect x="516.93" y="728.02" width="5.40" height="271.28" fill="none" stroke="#0B1525" stroke-width="1.5" stroke-opacity="0.75"/><rect x="524.41" y="787.79" width="5.40" height="211.51" fill="none" stroke="#0B1525" stroke-width="1.5" stroke-opacity="0.75"/><rect x="531.90" y="817.50" width="5.40" height="181.80" fill="none" stroke="#0B1525" stroke-width="1.5" stroke-opacity="0.75"/><rect x="539.38" y="842.09" width="5.40" height="157.21" fill="none" stroke="#0B1525" stroke-width="1.5" stroke-opacity="0.75"/><rect x="546.86" y="926.45" width="5.40" height="72.85" fill="none" stroke="#0B1525" stroke-width="1.5" stroke-opacity="0.75"/><rect x="554.35" y="948.31" width="5.40" height="50.99" fill="none" stroke="#0B1525" stroke-width="1.5" stroke-opacity="0.75"/><rect x="561.83" y="808.62" width="5.40" height="190.68" fill="none" stroke="#0B1525" stroke-width="1.5" stroke-opacity="0.75"/><rect x="569.32" y="791.89" width="5.40" height="207.41" fill="none" stroke="#0B1525" stroke-width="1.5" stroke-opacity="0.75"/><rect x="576.80" y="783.01" width="5.40" height="216.29" fill="none" stroke="#0B1525" stroke-width="1.5" stroke-opacity="0.75"/><rect x="584.53" y="741.34" width="5.40" height="257.96" fill="none" stroke="#0B1525" stroke-width="1.5" stroke-opacity="0.75"/><rect x="592.27" y="786.76" width="5.40" height="212.54" fill="none" stroke="#0B1525" stroke-width="1.5" stroke-opacity="0.75"/><rect x="600.00" y="912.79" width="5.40" height="86.51" fill="none" stroke="#0B1525" stroke-width="1.5" stroke-opacity="0.75"/><rect x="607.73" y="920.98" width="5.40" height="78.32" fill="none" stroke="#0B1525" stroke-width="1.5" stroke-opacity="0.75"/><rect x="615.47" y="775.15" width="5.40" height="224.15" fill="none" stroke="#0B1525" stroke-width="1.5" stroke-opacity="0.75"/><rect x="623.20" y="759.10" width="5.40" height="240.20" fill="none" stroke="#0B1525" stroke-width="1.5" stroke-opacity="0.75"/><rect x="630.93" y="816.82" width="5.40" height="182.48" fill="none" stroke="#0B1525" stroke-width="1.5" stroke-opacity="0.75"/><rect x="638.67" y="639.56" width="5.40" height="359.74" fill="none" stroke="#0B1525" stroke-width="1.5" stroke-opacity="0.75"/><rect x="646.40" y="737.24" width="5.40" height="262.06" fill="none" stroke="#0B1525" stroke-width="1.5" stroke-opacity="0.75"/><rect x="654.13" y="869.75" width="5.40" height="129.55" fill="none" stroke="#0B1525" stroke-width="1.5" stroke-opacity="0.75"/><rect x="661.87" y="905.27" width="5.40" height="94.03" fill="none" stroke="#0B1525" stroke-width="1.5" stroke-opacity="0.75"/><rect x="669.60" y="729.73" width="5.40" height="269.57" fill="none" stroke="#0B1525" stroke-width="1.5" stroke-opacity="0.75"/><rect x="677.33" y="790.52" width="5.40" height="208.78" fill="none" stroke="#0B1525" stroke-width="1.5" stroke-opacity="0.75"/><rect x="685.07" y="755.34" width="5.40" height="243.96" fill="none" stroke="#0B1525" stroke-width="1.5" stroke-opacity="0.75"/><rect x="692.80" y="768.32" width="5.40" height="230.98" fill="none" stroke="#0B1525" stroke-width="1.5" stroke-opacity="0.75"/><rect x="700.53" y="769.34" width="5.40" height="229.96" fill="none" stroke="#0B1525" stroke-width="1.5" stroke-opacity="0.75"/><rect x="708.27" y="877.61" width="5.40" height="121.69" fill="none" stroke="#0B1525" stroke-width="1.5" stroke-opacity="0.75"/><rect x="716.00" y="932.94" width="5.40" height="66.36" fill="none" stroke="#0B1525" stroke-width="1.5" stroke-opacity="0.75"/><rect x="723.73" y="788.13" width="5.40" height="211.17" fill="none" stroke="#0B1525" stroke-width="1.5" stroke-opacity="0.75"/><rect x="731.47" y="728.36" width="5.40" height="270.94" fill="none" stroke="#0B1525" stroke-width="1.5" stroke-opacity="0.75"/><rect x="739.20" y="753.29" width="5.40" height="246.01" fill="none" stroke="#0B1525" stroke-width="1.5" stroke-opacity="0.75"/><rect x="746.93" y="818.87" width="5.40" height="180.43" fill="none" stroke="#0B1525" stroke-width="1.5" stroke-opacity="0.75"/><rect x="754.67" y="768.32" width="5.40" height="230.98" fill="none" stroke="#0B1525" stroke-width="1.5" stroke-opacity="0.75"/><rect x="762.40" y="922.69" width="5.40" height="76.61" fill="none" stroke="#0B1525" stroke-width="1.5" stroke-opacity="0.75"/><rect x="770.13" y="930.55" width="5.40" height="68.75" fill="none" stroke="#0B1525" stroke-width="1.5" stroke-opacity="0.75"/><rect x="777.87" y="791.89" width="5.40" height="207.41" fill="none" stroke="#0B1525" stroke-width="1.5" stroke-opacity="0.75"/><rect x="785.60" y="773.44" width="5.40" height="225.86" fill="none" stroke="#0B1525" stroke-width="1.5" stroke-opacity="0.75"/><rect x="793.33" y="736.22" width="5.40" height="263.08" fill="none" stroke="#0B1525" stroke-width="1.5" stroke-opacity="0.75"/><rect x="801.07" y="817.16" width="5.40" height="182.14" fill="none" stroke="#0B1525" stroke-width="1.5" stroke-opacity="0.75"/><rect x="808.80" y="796.67" width="5.40" height="202.63" fill="none" stroke="#0B1525" stroke-width="1.5" stroke-opacity="0.75"/><rect x="816.36" y="919.62" width="5.40" height="79.68" fill="none" stroke="#0B1525" stroke-width="1.5" stroke-opacity="0.75"/><rect x="823.92" y="892.98" width="5.40" height="106.32" fill="none" stroke="#0B1525" stroke-width="1.5" stroke-opacity="0.75"/><rect x="831.48" y="739.63" width="5.40" height="259.67" fill="none" stroke="#0B1525" stroke-width="1.5" stroke-opacity="0.75"/><rect x="839.04" y="735.19" width="5.40" height="264.11" fill="none" stroke="#0B1525" stroke-width="1.5" stroke-opacity="0.75"/><rect x="846.60" y="816.13" width="5.40" height="183.17" fill="none" stroke="#0B1525" stroke-width="1.5" stroke-opacity="0.75"/><rect x="854.16" y="765.93" width="5.40" height="233.37" fill="none" stroke="#0B1525" stroke-width="1.5" stroke-opacity="0.75"/><rect x="861.72" y="763.20" width="5.40" height="236.10" fill="none" stroke="#0B1525" stroke-width="1.5" stroke-opacity="0.75"/><rect x="869.28" y="891.95" width="5.40" height="107.35" fill="none" stroke="#0B1525" stroke-width="1.5" stroke-opacity="0.75"/><rect x="876.84" y="919.28" width="5.40" height="80.02" fill="none" stroke="#0B1525" stroke-width="1.5" stroke-opacity="0.75"/><rect x="884.40" y="716.07" width="5.40" height="283.23" fill="none" stroke="#0B1525" stroke-width="1.5" stroke-opacity="0.75"/><rect x="891.96" y="793.93" width="5.40" height="205.37" fill="none" stroke="#0B1525" stroke-width="1.5" stroke-opacity="0.75"/><rect x="899.52" y="711.97" width="5.40" height="287.33" fill="none" stroke="#0B1525" stroke-width="1.5" stroke-opacity="0.75"/><rect x="907.08" y="771.05" width="5.40" height="228.25" fill="none" stroke="#0B1525" stroke-width="1.5" stroke-opacity="0.75"/><rect x="914.64" y="746.46" width="5.40" height="252.84" fill="none" stroke="#0B1525" stroke-width="1.5" stroke-opacity="0.75"/><rect x="922.20" y="884.44" width="5.40" height="114.86" fill="none" stroke="#0B1525" stroke-width="1.5" stroke-opacity="0.75"/><rect x="929.76" y="897.42" width="5.40" height="101.88" fill="none" stroke="#0B1525" stroke-width="1.5" stroke-opacity="0.75"/><rect x="937.32" y="755.34" width="5.40" height="243.96" fill="none" stroke="#0B1525" stroke-width="1.5" stroke-opacity="0.75"/><rect x="944.88" y="755.68" width="5.40" height="243.62" fill="none" stroke="#0B1525" stroke-width="1.5" stroke-opacity="0.75"/><rect x="952.44" y="718.11" width="5.40" height="281.19" fill="none" stroke="#0B1525" stroke-width="1.5" stroke-opacity="0.75"/><rect x="960.00" y="780.27" width="5.40" height="219.03" fill="none" stroke="#0B1525" stroke-width="1.5" stroke-opacity="0.75"/><rect x="967.56" y="874.54" width="5.40" height="124.76" fill="none" stroke="#0B1525" stroke-width="1.5" stroke-opacity="0.75"/><rect x="291.88" y="983.48" width="5.40" height="15.82" fill="#94DADA"/><rect x="291.88" y="974.26" width="5.40" height="9.22" fill="#F4A568"/><rect x="299.44" y="924.40" width="5.40" height="74.90" fill="#94DADA"/><rect x="299.44" y="866.34" width="5.40" height="58.06" fill="#F4A568"/><rect x="299.44" y="864.97" width="5.40" height="1.37" fill="#88BF4D"/><rect x="307.00" y="926.11" width="5.40" height="73.19" fill="#94DADA"/><rect x="307.00" y="866.68" width="5.40" height="59.43" fill="#F4A568"/><rect x="314.56" y="906.64" width="5.40" height="92.66" fill="#94DADA"/><rect x="314.56" y="856.43" width="5.40" height="50.20" fill="#F4A568"/><rect x="322.12" y="891.27" width="5.40" height="108.03" fill="#94DADA"/><rect x="322.12" y="806.91" width="5.40" height="84.36" fill="#F4A568"/><rect x="322.12" y="805.20" width="5.40" height="1.71" fill="#509EE3"/><rect x="329.68" y="927.13" width="5.40" height="72.17" fill="#94DADA"/><rect x="329.68" y="841.07" width="5.40" height="86.07" fill="#F4A568"/><rect x="337.24" y="964.70" width="5.40" height="34.60" fill="#94DADA"/><rect x="337.24" y="910.05" width="5.40" height="54.64" fill="#F4A568"/><rect x="344.80" y="967.43" width="5.40" height="31.87" fill="#94DADA"/><rect x="344.80" y="944.21" width="5.40" height="23.22" fill="#F4A568"/><rect x="352.28" y="882.73" width="5.40" height="116.57" fill="#94DADA"/><rect x="352.28" y="768.66" width="5.40" height="114.07" fill="#F4A568"/><rect x="352.28" y="766.95" width="5.40" height="1.71" fill="#509EE3"/><rect x="359.77" y="928.16" width="5.40" height="71.14" fill="#94DADA"/><rect x="359.77" y="848.92" width="5.40" height="79.23" fill="#F4A568"/><rect x="367.25" y="930.55" width="5.40" height="68.75" fill="#94DADA"/><rect x="367.25" y="870.78" width="5.40" height="59.77" fill="#F4A568"/><rect x="374.74" y="925.42" width="5.40" height="73.88" fill="#94DADA"/><rect x="374.74" y="871.46" width="5.40" height="53.96" fill="#F4A568"/><rect x="374.74" y="870.10" width="5.40" height="1.37" fill="#509EE3"/><rect x="382.22" y="927.81" width="5.40" height="71.49" fill="#94DADA"/><rect x="382.22" y="844.82" width="5.40" height="82.99" fill="#F4A568"/><rect x="389.70" y="975.97" width="5.40" height="23.33" fill="#94DADA"/><rect x="389.70" y="961.97" width="5.40" height="14.00" fill="#F4A568"/><rect x="397.19" y="971.53" width="5.40" height="27.77" fill="#94DADA"/><rect x="397.19" y="956.16" width="5.40" height="15.37" fill="#F4A568"/><rect x="404.67" y="932.25" width="5.40" height="67.05" fill="#94DADA"/><rect x="404.67" y="880.00" width="5.40" height="52.25" fill="#F4A568"/><rect x="412.15" y="904.93" width="5.40" height="94.37" fill="#94DADA"/><rect x="412.15" y="830.82" width="5.40" height="74.11" fill="#F4A568"/><rect x="412.15" y="829.11" width="5.40" height="1.71" fill="#509EE3"/><rect x="419.64" y="926.45" width="5.40" height="72.85" fill="#94DADA"/><rect x="419.64" y="856.43" width="5.40" height="70.01" fill="#F4A568"/><rect x="427.12" y="916.89" width="5.40" height="82.41" fill="#94DADA"/><rect x="427.12" y="871.80" width="5.40" height="45.08" fill="#F4A568"/><rect x="427.12" y="870.10" width="5.40" height="1.71" fill="#509EE3"/><rect x="434.61" y="928.16" width="5.40" height="71.14" fill="#94DADA"/><rect x="434.61" y="887.17" width="5.40" height="40.98" fill="#F4A568"/><rect x="442.09" y="975.97" width="5.40" height="23.33" fill="#94DADA"/><rect x="442.09" y="959.58" width="5.40" height="16.39" fill="#F4A568"/><rect x="449.57" y="968.11" width="5.40" height="31.19" fill="#94DADA"/><rect x="449.57" y="946.60" width="5.40" height="21.52" fill="#F4A568"/><rect x="457.06" y="873.17" width="5.40" height="126.13" fill="#94DADA"/><rect x="457.06" y="767.30" width="5.40" height="105.87" fill="#F4A568"/><rect x="464.54" y="912.79" width="5.40" height="86.51" fill="#94DADA"/><rect x="464.54" y="832.19" width="5.40" height="80.60" fill="#F4A568"/><rect x="472.03" y="925.42" width="5.40" height="73.88" fill="#94DADA"/><rect x="472.03" y="849.60" width="5.40" height="75.82" fill="#F4A568"/><rect x="472.03" y="848.24" width="5.40" height="1.37" fill="#509EE3"/><rect x="479.51" y="910.74" width="5.40" height="88.56" fill="#94DADA"/><rect x="479.51" y="812.38" width="5.40" height="98.36" fill="#F4A568"/><rect x="486.99" y="880.00" width="5.40" height="119.30" fill="#94DADA"/><rect x="486.99" y="780.96" width="5.40" height="99.04" fill="#F4A568"/><rect x="486.99" y="779.93" width="5.40" height="1.02" fill="#F9D45C"/><rect x="494.48" y="951.72" width="5.40" height="47.58" fill="#94DADA"/><rect x="494.48" y="915.52" width="5.40" height="36.20" fill="#F4A568"/><rect x="501.96" y="940.79" width="5.40" height="58.51" fill="#94DADA"/><rect x="501.96" y="896.39" width="5.40" height="44.40" fill="#F4A568"/><rect x="509.45" y="853.70" width="5.40" height="145.60" fill="#94DADA"/><rect x="509.45" y="735.87" width="5.40" height="117.83" fill="#F4A568"/><rect x="509.45" y="732.46" width="5.40" height="3.42" fill="#509EE3"/><rect x="516.93" y="864.63" width="5.40" height="134.67" fill="#94DADA"/><rect x="516.93" y="733.14" width="5.40" height="131.49" fill="#F4A568"/><rect x="516.93" y="728.02" width="5.40" height="5.12" fill="#509EE3"/><rect x="524.41" y="884.44" width="5.40" height="114.86" fill="#94DADA"/><rect x="524.41" y="788.81" width="5.40" height="95.63" fill="#F4A568"/><rect x="524.41" y="787.79" width="5.40" height="1.02" fill="#F9D45C"/><rect x="531.90" y="891.27" width="5.40" height="108.03" fill="#94DADA"/><rect x="531.90" y="819.55" width="5.40" height="71.72" fill="#F4A568"/><rect x="531.90" y="817.50" width="5.40" height="2.05" fill="#509EE3"/><rect x="539.38" y="912.45" width="5.40" height="86.85" fill="#94DADA"/><rect x="539.38" y="842.09" width="5.40" height="70.36" fill="#F4A568"/><rect x="546.86" y="964.02" width="5.40" height="35.28" fill="#94DADA"/><rect x="546.86" y="926.45" width="5.40" height="37.57" fill="#F4A568"/><rect x="554.35" y="972.21" width="5.40" height="27.09" fill="#94DADA"/><rect x="554.35" y="948.31" width="5.40" height="23.91" fill="#F4A568"/><rect x="561.83" y="889.56" width="5.40" height="109.74" fill="#94DADA"/><rect x="561.83" y="808.62" width="5.40" height="80.94" fill="#F4A568"/><rect x="569.32" y="899.81" width="5.40" height="99.49" fill="#94DADA"/><rect x="569.32" y="794.62" width="5.40" height="105.19" fill="#F4A568"/><rect x="569.32" y="793.25" width="5.40" height="1.37" fill="#509EE3"/><rect x="569.32" y="791.89" width="5.40" height="1.37" fill="#F9D45C"/><rect x="576.80" y="878.29" width="5.40" height="121.01" fill="#94DADA"/><rect x="576.80" y="785.40" width="5.40" height="92.90" fill="#F4A568"/><rect x="576.80" y="783.01" width="5.40" height="2.39" fill="#509EE3"/><rect x="584.53" y="875.90" width="5.40" height="123.40" fill="#94DADA"/><rect x="584.53" y="745.10" width="5.40" height="130.81" fill="#F4A568"/><rect x="584.53" y="741.34" width="5.40" height="3.76" fill="#88BF4D"/><rect x="592.27" y="892.30" width="5.40" height="107.00" fill="#94DADA"/><rect x="592.27" y="786.76" width="5.40" height="105.53" fill="#F4A568"/><rect x="600.00" y="964.02" width="5.40" height="35.28" fill="#94DADA"/><rect x="600.00" y="912.79" width="5.40" height="51.23" fill="#F4A568"/><rect x="607.73" y="957.19" width="5.40" height="42.11" fill="#94DADA"/><rect x="607.73" y="920.98" width="5.40" height="36.20" fill="#F4A568"/><rect x="615.47" y="880.00" width="5.40" height="119.30" fill="#94DADA"/><rect x="615.47" y="778.57" width="5.40" height="101.43" fill="#F4A568"/><rect x="615.47" y="776.52" width="5.40" height="2.05" fill="#509EE3"/><rect x="615.47" y="775.15" width="5.40" height="1.37" fill="#F9D45C"/><rect x="623.20" y="869.07" width="5.40" height="130.23" fill="#94DADA"/><rect x="623.20" y="763.20" width="5.40" height="105.87" fill="#F4A568"/><rect x="623.20" y="761.15" width="5.40" height="2.05" fill="#F9D45C"/><rect x="623.20" y="759.10" width="5.40" height="2.05" fill="#88BF4D"/><rect x="630.93" y="907.32" width="5.40" height="91.98" fill="#94DADA"/><rect x="630.93" y="816.82" width="5.40" height="90.51" fill="#F4A568"/><rect x="638.67" y="816.13" width="5.40" height="183.17" fill="#94DADA"/><rect x="638.67" y="643.66" width="5.40" height="172.47" fill="#F4A568"/><rect x="638.67" y="639.56" width="5.40" height="4.10" fill="#88BF4D"/><rect x="646.40" y="861.56" width="5.40" height="137.74" fill="#94DADA"/><rect x="646.40" y="739.97" width="5.40" height="121.58" fill="#F4A568"/><rect x="646.40" y="737.24" width="5.40" height="2.73" fill="#509EE3"/><rect x="654.13" y="930.55" width="5.40" height="68.75" fill="#94DADA"/><rect x="654.13" y="871.80" width="5.40" height="58.74" fill="#F4A568"/><rect x="654.13" y="869.75" width="5.40" height="2.05" fill="#F9D45C"/><rect x="661.87" y="948.31" width="5.40" height="50.99" fill="#94DADA"/><rect x="661.87" y="907.32" width="5.40" height="40.98" fill="#F4A568"/><rect x="661.87" y="905.27" width="5.40" height="2.05" fill="#F9D45C"/><rect x="669.60" y="868.05" width="5.40" height="131.25" fill="#94DADA"/><rect x="669.60" y="732.46" width="5.40" height="135.59" fill="#F4A568"/><rect x="669.60" y="729.73" width="5.40" height="2.73" fill="#509EE3"/><rect x="677.33" y="880.00" width="5.40" height="119.30" fill="#94DADA"/><rect x="677.33" y="794.62" width="5.40" height="85.38" fill="#F4A568"/><rect x="677.33" y="791.89" width="5.40" height="2.73" fill="#509EE3"/><rect x="677.33" y="790.52" width="5.40" height="1.37" fill="#F9D45C"/><rect x="685.07" y="863.95" width="5.40" height="135.35" fill="#94DADA"/><rect x="685.07" y="757.05" width="5.40" height="106.90" fill="#F4A568"/><rect x="685.07" y="755.34" width="5.40" height="1.71" fill="#F9D45C"/><rect x="692.80" y="876.58" width="5.40" height="122.72" fill="#94DADA"/><rect x="692.80" y="771.73" width="5.40" height="104.85" fill="#F4A568"/><rect x="692.80" y="770.03" width="5.40" height="1.71" fill="#509EE3"/><rect x="692.80" y="768.32" width="5.40" height="1.71" fill="#88BF4D"/><rect x="700.53" y="868.05" width="5.40" height="131.25" fill="#94DADA"/><rect x="700.53" y="772.08" width="5.40" height="95.97" fill="#F4A568"/><rect x="700.53" y="769.34" width="5.40" height="2.73" fill="#509EE3"/><rect x="708.27" y="933.96" width="5.40" height="65.34" fill="#94DADA"/><rect x="708.27" y="877.61" width="5.40" height="56.35" fill="#F4A568"/><rect x="716.00" y="965.38" width="5.40" height="33.92" fill="#94DADA"/><rect x="716.00" y="932.94" width="5.40" height="32.45" fill="#F4A568"/><rect x="723.73" y="875.22" width="5.40" height="124.08" fill="#94DADA"/><rect x="723.73" y="788.13" width="5.40" height="87.09" fill="#F4A568"/><rect x="731.47" y="837.65" width="5.40" height="161.65" fill="#94DADA"/><rect x="731.47" y="731.78" width="5.40" height="105.87" fill="#F4A568"/><rect x="731.47" y="728.36" width="5.40" height="3.42" fill="#88BF4D"/><rect x="739.20" y="847.55" width="5.40" height="151.75" fill="#94DADA"/><rect x="739.20" y="755.34" width="5.40" height="92.21" fill="#F4A568"/><rect x="739.20" y="753.29" width="5.40" height="2.05" fill="#F9D45C"/><rect x="746.93" y="876.58" width="5.40" height="122.72" fill="#94DADA"/><rect x="746.93" y="818.87" width="5.40" height="57.72" fill="#F4A568"/><rect x="754.67" y="863.95" width="5.40" height="135.35" fill="#94DADA"/><rect x="754.67" y="770.03" width="5.40" height="93.92" fill="#F4A568"/><rect x="754.67" y="768.32" width="5.40" height="1.71" fill="#F9D45C"/><rect x="762.40" y="942.50" width="5.40" height="56.80" fill="#94DADA"/><rect x="762.40" y="922.69" width="5.40" height="19.81" fill="#F4A568"/><rect x="770.13" y="957.87" width="5.40" height="41.43" fill="#94DADA"/><rect x="770.13" y="930.55" width="5.40" height="27.32" fill="#F4A568"/><rect x="777.87" y="879.32" width="5.40" height="119.98" fill="#94DADA"/><rect x="777.87" y="793.93" width="5.40" height="85.38" fill="#F4A568"/><rect x="777.87" y="791.89" width="5.40" height="2.05" fill="#509EE3"/><rect x="785.60" y="856.09" width="5.40" height="143.21" fill="#94DADA"/><rect x="785.60" y="773.44" width="5.40" height="82.65" fill="#F4A568"/><rect x="793.33" y="859.51" width="5.40" height="139.79" fill="#94DADA"/><rect x="793.33" y="738.61" width="5.40" height="120.90" fill="#F4A568"/><rect x="793.33" y="736.22" width="5.40" height="2.39" fill="#88BF4D"/><rect x="801.07" y="916.89" width="5.40" height="82.41" fill="#94DADA"/><rect x="801.07" y="818.87" width="5.40" height="98.02" fill="#F4A568"/><rect x="801.07" y="817.16" width="5.40" height="1.71" fill="#F9D45C"/><rect x="808.80" y="877.61" width="5.40" height="121.69" fill="#94DADA"/><rect x="808.80" y="798.37" width="5.40" height="79.23" fill="#F4A568"/><rect x="808.80" y="796.67" width="5.40" height="1.71" fill="#F9D45C"/><rect x="816.36" y="947.62" width="5.40" height="51.68" fill="#94DADA"/><rect x="816.36" y="919.62" width="5.40" height="28.01" fill="#F4A568"/><rect x="823.92" y="923.72" width="5.40" height="75.58" fill="#94DADA"/><rect x="823.92" y="892.98" width="5.40" height="30.74" fill="#F4A568"/><rect x="831.48" y="847.90" width="5.40" height="151.40" fill="#94DADA"/><rect x="831.48" y="743.39" width="5.40" height="104.51" fill="#F4A568"/><rect x="831.48" y="740.66" width="5.40" height="2.73" fill="#509EE3"/><rect x="831.48" y="739.63" width="5.40" height="1.02" fill="#F9D45C"/><rect x="839.04" y="863.27" width="5.40" height="136.03" fill="#94DADA"/><rect x="839.04" y="737.58" width="5.40" height="125.68" fill="#F4A568"/><rect x="839.04" y="735.19" width="5.40" height="2.39" fill="#509EE3"/><rect x="846.60" y="886.83" width="5.40" height="112.47" fill="#94DADA"/><rect x="846.60" y="816.13" width="5.40" height="70.70" fill="#F4A568"/><rect x="854.16" y="870.10" width="5.40" height="129.20" fill="#94DADA"/><rect x="854.16" y="767.64" width="5.40" height="102.46" fill="#F4A568"/><rect x="854.16" y="765.93" width="5.40" height="1.71" fill="#F9D45C"/><rect x="861.72" y="863.27" width="5.40" height="136.03" fill="#94DADA"/><rect x="861.72" y="765.93" width="5.40" height="97.34" fill="#F4A568"/><rect x="861.72" y="763.20" width="5.40" height="2.73" fill="#88BF4D"/><rect x="869.28" y="929.86" width="5.40" height="69.44" fill="#94DADA"/><rect x="869.28" y="891.95" width="5.40" height="37.91" fill="#F4A568"/><rect x="876.84" y="954.45" width="5.40" height="44.85" fill="#94DADA"/><rect x="876.84" y="920.98" width="5.40" height="33.47" fill="#F4A568"/><rect x="876.84" y="919.28" width="5.40" height="1.71" fill="#F9D45C"/><rect x="884.40" y="847.90" width="5.40" height="151.40" fill="#94DADA"/><rect x="884.40" y="719.82" width="5.40" height="128.07" fill="#F4A568"/><rect x="884.40" y="716.07" width="5.40" height="3.76" fill="#509EE3"/><rect x="891.96" y="891.27" width="5.40" height="108.03" fill="#94DADA"/><rect x="891.96" y="803.50" width="5.40" height="87.77" fill="#F4A568"/><rect x="891.96" y="795.64" width="5.40" height="7.86" fill="#509EE3"/><rect x="891.96" y="793.93" width="5.40" height="1.71" fill="#F9D45C"/><rect x="899.52" y="858.83" width="5.40" height="140.47" fill="#94DADA"/><rect x="899.52" y="717.09" width="5.40" height="141.73" fill="#F4A568"/><rect x="899.52" y="715.38" width="5.40" height="1.71" fill="#A989C5"/><rect x="899.52" y="711.97" width="5.40" height="3.42" fill="#F9D45C"/><rect x="907.08" y="865.66" width="5.40" height="133.64" fill="#94DADA"/><rect x="907.08" y="773.44" width="5.40" height="92.21" fill="#F4A568"/><rect x="907.08" y="771.05" width="5.40" height="2.39" fill="#F9D45C"/><rect x="914.64" y="858.83" width="5.40" height="140.47" fill="#94DADA"/><rect x="914.64" y="749.54" width="5.40" height="109.29" fill="#F4A568"/><rect x="914.64" y="746.46" width="5.40" height="3.07" fill="#88BF4D"/><rect x="922.20" y="935.67" width="5.40" height="63.63" fill="#94DADA"/><rect x="922.20" y="886.15" width="5.40" height="49.52" fill="#F4A568"/><rect x="922.20" y="884.44" width="5.40" height="1.71" fill="#509EE3"/><rect x="929.76" y="949.33" width="5.40" height="49.97" fill="#94DADA"/><rect x="929.76" y="897.42" width="5.40" height="51.91" fill="#F4A568"/><rect x="937.32" y="855.41" width="5.40" height="143.89" fill="#94DADA"/><rect x="937.32" y="758.07" width="5.40" height="97.34" fill="#F4A568"/><rect x="937.32" y="755.34" width="5.40" height="2.73" fill="#88BF4D"/><rect x="944.88" y="868.05" width="5.40" height="131.25" fill="#94DADA"/><rect x="944.88" y="761.49" width="5.40" height="106.56" fill="#F4A568"/><rect x="944.88" y="755.68" width="5.40" height="5.81" fill="#EF8C8C"/><rect x="952.44" y="840.04" width="5.40" height="159.26" fill="#94DADA"/><rect x="952.44" y="718.11" width="5.40" height="121.93" fill="#F4A568"/><rect x="960.00" y="871.80" width="5.40" height="127.50" fill="#94DADA"/><rect x="960.00" y="783.69" width="5.40" height="88.11" fill="#F4A568"/><rect x="960.00" y="780.27" width="5.40" height="3.42" fill="#509EE3"/><rect x="967.56" y="932.25" width="5.40" height="67.05" fill="#94DADA"/><rect x="967.56" y="876.58" width="5.40" height="55.67" fill="#F4A568"/><rect x="967.56" y="874.54" width="5.40" height="2.05" fill="#F9D45C"/><line x1="1318" y1="690.8" x2="1997" y2="690.8" stroke="#4C566D" stroke-width="1.0" stroke-dasharray="8 4.85" opacity="1"/><line x1="1318" y1="742.6" x2="1997" y2="742.6" stroke="#4C566D" stroke-width="1.0" stroke-dasharray="8 4.85" opacity="1"/><line x1="1318" y1="794.5" x2="1997" y2="794.5" stroke="#4C566D" stroke-width="1.0" stroke-dasharray="8 4.85" opacity="1"/><line x1="1318" y1="846.3" x2="1997" y2="846.3" stroke="#4C566D" stroke-width="1.0" stroke-dasharray="8 4.85" opacity="1"/><line x1="1318" y1="898.1" x2="1997" y2="898.1" stroke="#4C566D" stroke-width="1.0" stroke-dasharray="8 4.85" opacity="1"/><line x1="1318" y1="999.3" x2="1997" y2="999.3" stroke="#363F55" stroke-width="1.0" stroke-dasharray="8 4.85" opacity="1"/><rect x="1319.55" y="638.90" width="5.40" height="21.84" fill="none" stroke="#0B1525" stroke-width="1.5" stroke-opacity="0.75"/><rect x="1327.10" y="638.90" width="5.40" height="104.83" fill="none" stroke="#0B1525" stroke-width="1.5" stroke-opacity="0.75"/><rect x="1334.65" y="638.90" width="5.40" height="96.97" fill="none" stroke="#0B1525" stroke-width="1.5" stroke-opacity="0.75"/><rect x="1342.20" y="638.90" width="5.40" height="114.73" fill="none" stroke="#0B1525" stroke-width="1.5" stroke-opacity="0.75"/><rect x="1349.75" y="638.90" width="5.40" height="119.86" fill="none" stroke="#0B1525" stroke-width="1.5" stroke-opacity="0.75"/><rect x="1357.30" y="638.90" width="5.40" height="108.93" fill="none" stroke="#0B1525" stroke-width="1.5" stroke-opacity="0.75"/><rect x="1364.85" y="638.90" width="5.40" height="55.99" fill="none" stroke="#0B1525" stroke-width="1.5" stroke-opacity="0.75"/><rect x="1372.40" y="638.90" width="5.40" height="39.60" fill="none" stroke="#0B1525" stroke-width="1.5" stroke-opacity="0.75"/><rect x="1379.82" y="638.90" width="5.40" height="154.01" fill="none" stroke="#0B1525" stroke-width="1.5" stroke-opacity="0.75"/><rect x="1387.24" y="638.90" width="5.40" height="116.44" fill="none" stroke="#0B1525" stroke-width="1.5" stroke-opacity="0.75"/><rect x="1394.66" y="638.90" width="5.40" height="103.46" fill="none" stroke="#0B1525" stroke-width="1.5" stroke-opacity="0.75"/><rect x="1402.08" y="638.90" width="5.40" height="85.02" fill="none" stroke="#0B1525" stroke-width="1.5" stroke-opacity="0.75"/><rect x="1409.50" y="638.90" width="5.40" height="108.93" fill="none" stroke="#0B1525" stroke-width="1.5" stroke-opacity="0.75"/><rect x="1416.92" y="638.90" width="5.40" height="28.67" fill="none" stroke="#0B1525" stroke-width="1.5" stroke-opacity="0.75"/><rect x="1424.34" y="638.90" width="5.40" height="33.79" fill="none" stroke="#0B1525" stroke-width="1.5" stroke-opacity="0.75"/><rect x="1431.75" y="638.90" width="5.40" height="83.65" fill="none" stroke="#0B1525" stroke-width="1.5" stroke-opacity="0.75"/><rect x="1439.17" y="638.90" width="5.40" height="125.32" fill="none" stroke="#0B1525" stroke-width="1.5" stroke-opacity="0.75"/><rect x="1446.59" y="638.90" width="5.40" height="120.20" fill="none" stroke="#0B1525" stroke-width="1.5" stroke-opacity="0.75"/><rect x="1454.01" y="638.90" width="5.40" height="95.61" fill="none" stroke="#0B1525" stroke-width="1.5" stroke-opacity="0.75"/><rect x="1461.43" y="638.90" width="5.40" height="85.02" fill="none" stroke="#0B1525" stroke-width="1.5" stroke-opacity="0.75"/><rect x="1468.85" y="638.90" width="5.40" height="26.96" fill="none" stroke="#0B1525" stroke-width="1.5" stroke-opacity="0.75"/><rect x="1476.27" y="638.90" width="5.40" height="29.69" fill="none" stroke="#0B1525" stroke-width="1.5" stroke-opacity="0.75"/><rect x="1483.69" y="638.90" width="5.40" height="138.30" fill="none" stroke="#0B1525" stroke-width="1.5" stroke-opacity="0.75"/><rect x="1491.11" y="638.90" width="5.40" height="120.20" fill="none" stroke="#0B1525" stroke-width="1.5" stroke-opacity="0.75"/><rect x="1498.53" y="638.90" width="5.40" height="114.73" fill="none" stroke="#0B1525" stroke-width="1.5" stroke-opacity="0.75"/><rect x="1505.95" y="638.90" width="5.40" height="127.03" fill="none" stroke="#0B1525" stroke-width="1.5" stroke-opacity="0.75"/><rect x="1513.37" y="638.90" width="5.40" height="155.03" fill="none" stroke="#0B1525" stroke-width="1.5" stroke-opacity="0.75"/><rect x="1520.79" y="638.90" width="5.40" height="59.41" fill="none" stroke="#0B1525" stroke-width="1.5" stroke-opacity="0.75"/><rect x="1528.21" y="638.90" width="5.40" height="54.28" fill="none" stroke="#0B1525" stroke-width="1.5" stroke-opacity="0.75"/><rect x="1535.63" y="638.90" width="5.40" height="178.26" fill="none" stroke="#0B1525" stroke-width="1.5" stroke-opacity="0.75"/><rect x="1543.05" y="638.90" width="5.40" height="213.09" fill="none" stroke="#0B1525" stroke-width="1.5" stroke-opacity="0.75"/><rect x="1550.46" y="638.90" width="5.40" height="144.79" fill="none" stroke="#0B1525" stroke-width="1.5" stroke-opacity="0.75"/><rect x="1557.88" y="638.90" width="5.40" height="134.54" fill="none" stroke="#0B1525" stroke-width="1.5" stroke-opacity="0.75"/><rect x="1565.30" y="638.90" width="5.40" height="117.81" fill="none" stroke="#0B1525" stroke-width="1.5" stroke-opacity="0.75"/><rect x="1572.72" y="638.90" width="5.40" height="46.43" fill="none" stroke="#0B1525" stroke-width="1.5" stroke-opacity="0.75"/><rect x="1580.14" y="638.90" width="5.40" height="33.79" fill="none" stroke="#0B1525" stroke-width="1.5" stroke-opacity="0.75"/><rect x="1587.56" y="638.90" width="5.40" height="144.79" fill="none" stroke="#0B1525" stroke-width="1.5" stroke-opacity="0.75"/><rect x="1594.98" y="638.90" width="5.40" height="176.89" fill="none" stroke="#0B1525" stroke-width="1.5" stroke-opacity="0.75"/><rect x="1602.40" y="638.90" width="5.40" height="150.94" fill="none" stroke="#0B1525" stroke-width="1.5" stroke-opacity="0.75"/><rect x="1610.07" y="638.90" width="5.40" height="187.48" fill="none" stroke="#0B1525" stroke-width="1.5" stroke-opacity="0.75"/><rect x="1617.73" y="638.90" width="5.40" height="138.30" fill="none" stroke="#0B1525" stroke-width="1.5" stroke-opacity="0.75"/><rect x="1625.40" y="638.90" width="5.40" height="48.82" fill="none" stroke="#0B1525" stroke-width="1.5" stroke-opacity="0.75"/><rect x="1633.07" y="638.90" width="5.40" height="52.92" fill="none" stroke="#0B1525" stroke-width="1.5" stroke-opacity="0.75"/><rect x="1640.73" y="638.90" width="5.40" height="161.52" fill="none" stroke="#0B1525" stroke-width="1.5" stroke-opacity="0.75"/><rect x="1648.40" y="638.90" width="5.40" height="165.28" fill="none" stroke="#0B1525" stroke-width="1.5" stroke-opacity="0.75"/><rect x="1656.07" y="638.90" width="5.40" height="138.30" fill="none" stroke="#0B1525" stroke-width="1.5" stroke-opacity="0.75"/><rect x="1663.73" y="638.90" width="5.40" height="360.64" fill="none" stroke="#0B1525" stroke-width="1.5" stroke-opacity="0.75"/><rect x="1671.40" y="638.90" width="5.40" height="173.14" fill="none" stroke="#0B1525" stroke-width="1.5" stroke-opacity="0.75"/><rect x="1679.07" y="638.90" width="5.40" height="95.61" fill="none" stroke="#0B1525" stroke-width="1.5" stroke-opacity="0.75"/><rect x="1686.73" y="638.90" width="5.40" height="63.50" fill="none" stroke="#0B1525" stroke-width="1.5" stroke-opacity="0.75"/><rect x="1694.40" y="638.90" width="5.40" height="207.29" fill="none" stroke="#0B1525" stroke-width="1.5" stroke-opacity="0.75"/><rect x="1702.07" y="638.90" width="5.40" height="154.01" fill="none" stroke="#0B1525" stroke-width="1.5" stroke-opacity="0.75"/><rect x="1709.73" y="638.90" width="5.40" height="160.16" fill="none" stroke="#0B1525" stroke-width="1.5" stroke-opacity="0.75"/><rect x="1717.40" y="638.90" width="5.40" height="171.77" fill="none" stroke="#0B1525" stroke-width="1.5" stroke-opacity="0.75"/><rect x="1725.07" y="638.90" width="5.40" height="161.52" fill="none" stroke="#0B1525" stroke-width="1.5" stroke-opacity="0.75"/><rect x="1732.73" y="638.90" width="5.40" height="72.38" fill="none" stroke="#0B1525" stroke-width="1.5" stroke-opacity="0.75"/><rect x="1740.40" y="638.90" width="5.40" height="45.06" fill="none" stroke="#0B1525" stroke-width="1.5" stroke-opacity="0.75"/><rect x="1748.07" y="638.90" width="5.40" height="140.69" fill="none" stroke="#0B1525" stroke-width="1.5" stroke-opacity="0.75"/><rect x="1755.73" y="638.90" width="5.40" height="215.83" fill="none" stroke="#0B1525" stroke-width="1.5" stroke-opacity="0.75"/><rect x="1763.40" y="638.90" width="5.40" height="182.02" fill="none" stroke="#0B1525" stroke-width="1.5" stroke-opacity="0.75"/><rect x="1771.07" y="638.90" width="5.40" height="109.95" fill="none" stroke="#0B1525" stroke-width="1.5" stroke-opacity="0.75"/><rect x="1778.73" y="638.90" width="5.40" height="150.94" fill="none" stroke="#0B1525" stroke-width="1.5" stroke-opacity="0.75"/><rect x="1786.40" y="638.90" width="5.40" height="55.99" fill="none" stroke="#0B1525" stroke-width="1.5" stroke-opacity="0.75"/><rect x="1794.07" y="638.90" width="5.40" height="52.92" fill="none" stroke="#0B1525" stroke-width="1.5" stroke-opacity="0.75"/><rect x="1801.73" y="638.90" width="5.40" height="265.01" fill="none" stroke="#0B1525" stroke-width="1.5" stroke-opacity="0.75"/><rect x="1809.40" y="638.90" width="5.40" height="144.79" fill="none" stroke="#0B1525" stroke-width="1.5" stroke-opacity="0.75"/><rect x="1817.07" y="638.90" width="5.40" height="188.85" fill="none" stroke="#0B1525" stroke-width="1.5" stroke-opacity="0.75"/><rect x="1824.73" y="638.90" width="5.40" height="132.83" fill="none" stroke="#0B1525" stroke-width="1.5" stroke-opacity="0.75"/><rect x="1832.40" y="638.90" width="5.40" height="129.08" fill="none" stroke="#0B1525" stroke-width="1.5" stroke-opacity="0.75"/><rect x="1839.95" y="638.90" width="5.40" height="63.50" fill="none" stroke="#0B1525" stroke-width="1.5" stroke-opacity="0.75"/><rect x="1847.50" y="638.90" width="5.40" height="57.02" fill="none" stroke="#0B1525" stroke-width="1.5" stroke-opacity="0.75"/><rect x="1855.05" y="638.90" width="5.40" height="184.75" fill="none" stroke="#0B1525" stroke-width="1.5" stroke-opacity="0.75"/><rect x="1862.60" y="638.90" width="5.40" height="184.75" fill="none" stroke="#0B1525" stroke-width="1.5" stroke-opacity="0.75"/><rect x="1870.15" y="638.90" width="5.40" height="139.67" fill="none" stroke="#0B1525" stroke-width="1.5" stroke-opacity="0.75"/><rect x="1877.70" y="638.90" width="5.40" height="160.16" fill="none" stroke="#0B1525" stroke-width="1.5" stroke-opacity="0.75"/><rect x="1885.25" y="638.90" width="5.40" height="152.64" fill="none" stroke="#0B1525" stroke-width="1.5" stroke-opacity="0.75"/><rect x="1892.80" y="638.90" width="5.40" height="74.77" fill="none" stroke="#0B1525" stroke-width="1.5" stroke-opacity="0.75"/><rect x="1900.35" y="638.90" width="5.40" height="68.97" fill="none" stroke="#0B1525" stroke-width="1.5" stroke-opacity="0.75"/><rect x="1907.90" y="638.90" width="5.40" height="213.09" fill="none" stroke="#0B1525" stroke-width="1.5" stroke-opacity="0.75"/><rect x="1915.45" y="638.90" width="5.40" height="170.74" fill="none" stroke="#0B1525" stroke-width="1.5" stroke-opacity="0.75"/><rect x="1923.00" y="638.90" width="5.40" height="200.12" fill="none" stroke="#0B1525" stroke-width="1.5" stroke-opacity="0.75"/><rect x="1930.55" y="638.90" width="5.40" height="165.62" fill="none" stroke="#0B1525" stroke-width="1.5" stroke-opacity="0.75"/><rect x="1938.10" y="638.90" width="5.40" height="192.60" fill="none" stroke="#0B1525" stroke-width="1.5" stroke-opacity="0.75"/><rect x="1945.65" y="638.90" width="5.40" height="86.73" fill="none" stroke="#0B1525" stroke-width="1.5" stroke-opacity="0.75"/><rect x="1953.20" y="638.90" width="5.40" height="76.14" fill="none" stroke="#0B1525" stroke-width="1.5" stroke-opacity="0.75"/><rect x="1960.75" y="638.90" width="5.40" height="187.48" fill="none" stroke="#0B1525" stroke-width="1.5" stroke-opacity="0.75"/><rect x="1968.30" y="638.90" width="5.40" height="186.11" fill="none" stroke="#0B1525" stroke-width="1.5" stroke-opacity="0.75"/><rect x="1975.85" y="638.90" width="5.40" height="182.02" fill="none" stroke="#0B1525" stroke-width="1.5" stroke-opacity="0.75"/><rect x="1983.40" y="638.90" width="5.40" height="157.77" fill="none" stroke="#0B1525" stroke-width="1.5" stroke-opacity="0.75"/><rect x="1990.95" y="638.90" width="5.40" height="84.00" fill="none" stroke="#0B1525" stroke-width="1.5" stroke-opacity="0.75"/><rect x="1319.55" y="638.90" width="5.40" height="8.86" fill="#F4A568"/><rect x="1319.55" y="647.76" width="5.40" height="12.98" fill="#94DADA"/><rect x="1327.10" y="638.90" width="5.40" height="3.40" fill="#F9D45C"/><rect x="1327.10" y="642.30" width="5.40" height="45.77" fill="#F4A568"/><rect x="1327.10" y="688.06" width="5.40" height="55.67" fill="#94DADA"/><rect x="1334.65" y="638.90" width="5.40" height="5.44" fill="#F9D45C"/><rect x="1334.65" y="644.34" width="5.40" height="39.62" fill="#F4A568"/><rect x="1334.65" y="683.96" width="5.40" height="51.91" fill="#94DADA"/><rect x="1342.20" y="638.90" width="5.40" height="4.08" fill="#F9D45C"/><rect x="1342.20" y="642.98" width="5.40" height="48.50" fill="#F4A568"/><rect x="1342.20" y="691.48" width="5.40" height="62.16" fill="#94DADA"/><rect x="1349.75" y="638.90" width="5.40" height="50.87" fill="#F4A568"/><rect x="1349.75" y="689.77" width="5.40" height="68.99" fill="#94DADA"/><rect x="1357.30" y="638.90" width="5.40" height="57.02" fill="#F4A568"/><rect x="1357.30" y="695.92" width="5.40" height="51.91" fill="#94DADA"/><rect x="1364.85" y="638.90" width="5.40" height="29.35" fill="#F4A568"/><rect x="1364.85" y="668.25" width="5.40" height="26.64" fill="#94DADA"/><rect x="1372.40" y="638.90" width="5.40" height="19.45" fill="#F4A568"/><rect x="1372.40" y="658.35" width="5.40" height="20.15" fill="#94DADA"/><rect x="1379.82" y="638.90" width="5.40" height="73.07" fill="#F4A568"/><rect x="1379.82" y="711.97" width="5.40" height="80.94" fill="#94DADA"/><rect x="1387.24" y="638.90" width="5.40" height="2.71" fill="#F9D45C"/><rect x="1387.24" y="641.61" width="5.40" height="57.72" fill="#F4A568"/><rect x="1387.24" y="699.33" width="5.40" height="56.01" fill="#94DADA"/><rect x="1394.66" y="638.90" width="5.40" height="52.58" fill="#F4A568"/><rect x="1394.66" y="691.48" width="5.40" height="50.89" fill="#94DADA"/><rect x="1402.08" y="638.90" width="5.40" height="36.18" fill="#F4A568"/><rect x="1402.08" y="675.08" width="5.40" height="48.84" fill="#94DADA"/><rect x="1409.50" y="638.90" width="5.40" height="2.37" fill="#509EE3"/><rect x="1409.50" y="641.27" width="5.40" height="53.62" fill="#F4A568"/><rect x="1409.50" y="694.89" width="5.40" height="52.94" fill="#94DADA"/><rect x="1416.92" y="638.90" width="5.40" height="12.27" fill="#F4A568"/><rect x="1416.92" y="651.17" width="5.40" height="16.39" fill="#94DADA"/><rect x="1424.34" y="638.90" width="5.40" height="2.71" fill="#EF8C8C"/><rect x="1424.34" y="641.61" width="5.40" height="10.59" fill="#F4A568"/><rect x="1424.34" y="652.20" width="5.40" height="20.49" fill="#94DADA"/><rect x="1431.75" y="638.90" width="5.40" height="38.91" fill="#F4A568"/><rect x="1431.75" y="677.81" width="5.40" height="44.74" fill="#94DADA"/><rect x="1439.17" y="638.90" width="5.40" height="6.47" fill="#F9D45C"/><rect x="1439.17" y="645.37" width="5.40" height="54.99" fill="#F4A568"/><rect x="1439.17" y="700.36" width="5.40" height="63.87" fill="#94DADA"/><rect x="1446.59" y="638.90" width="5.40" height="57.02" fill="#F4A568"/><rect x="1446.59" y="695.92" width="5.40" height="63.18" fill="#94DADA"/><rect x="1454.01" y="638.90" width="5.40" height="2.71" fill="#F9D45C"/><rect x="1454.01" y="641.61" width="5.40" height="36.20" fill="#F4A568"/><rect x="1454.01" y="677.81" width="5.40" height="56.69" fill="#94DADA"/><rect x="1461.43" y="638.90" width="5.40" height="2.37" fill="#509EE3"/><rect x="1461.43" y="641.27" width="5.40" height="30.40" fill="#F4A568"/><rect x="1461.43" y="671.67" width="5.40" height="52.25" fill="#94DADA"/><rect x="1468.85" y="638.90" width="5.40" height="13.30" fill="#F4A568"/><rect x="1468.85" y="652.20" width="5.40" height="13.66" fill="#94DADA"/><rect x="1476.27" y="638.90" width="5.40" height="13.30" fill="#F4A568"/><rect x="1476.27" y="652.20" width="5.40" height="16.39" fill="#94DADA"/><rect x="1483.69" y="638.90" width="5.40" height="62.14" fill="#F4A568"/><rect x="1483.69" y="701.04" width="5.40" height="76.16" fill="#94DADA"/><rect x="1491.11" y="638.90" width="5.40" height="51.55" fill="#F4A568"/><rect x="1491.11" y="690.45" width="5.40" height="68.65" fill="#94DADA"/><rect x="1498.53" y="638.90" width="5.40" height="58.38" fill="#F4A568"/><rect x="1498.53" y="697.28" width="5.40" height="56.35" fill="#94DADA"/><rect x="1505.95" y="638.90" width="5.40" height="61.11" fill="#F4A568"/><rect x="1505.95" y="700.01" width="5.40" height="65.92" fill="#94DADA"/><rect x="1513.37" y="638.90" width="5.40" height="76.48" fill="#F4A568"/><rect x="1513.37" y="715.38" width="5.40" height="78.55" fill="#94DADA"/><rect x="1520.79" y="638.90" width="5.40" height="24.91" fill="#F4A568"/><rect x="1520.79" y="663.81" width="5.40" height="34.49" fill="#94DADA"/><rect x="1528.21" y="638.90" width="5.40" height="22.18" fill="#F4A568"/><rect x="1528.21" y="661.08" width="5.40" height="32.10" fill="#94DADA"/><rect x="1535.63" y="638.90" width="5.40" height="3.40" fill="#509EE3"/><rect x="1535.63" y="642.30" width="5.40" height="85.04" fill="#F4A568"/><rect x="1535.63" y="727.34" width="5.40" height="89.82" fill="#94DADA"/><rect x="1543.05" y="638.90" width="5.40" height="3.40" fill="#F9D45C"/><rect x="1543.05" y="642.30" width="5.40" height="2.05" fill="#509EE3"/><rect x="1543.05" y="644.34" width="5.40" height="103.48" fill="#F4A568"/><rect x="1543.05" y="747.83" width="5.40" height="104.17" fill="#94DADA"/><rect x="1550.46" y="638.90" width="5.40" height="61.80" fill="#F4A568"/><rect x="1550.46" y="700.70" width="5.40" height="82.99" fill="#94DADA"/><rect x="1557.88" y="638.90" width="5.40" height="3.40" fill="#F9D45C"/><rect x="1557.88" y="642.30" width="5.40" height="57.72" fill="#F4A568"/><rect x="1557.88" y="700.01" width="5.40" height="73.43" fill="#94DADA"/><rect x="1565.30" y="638.90" width="5.40" height="53.26" fill="#F4A568"/><rect x="1565.30" y="692.16" width="5.40" height="64.55" fill="#94DADA"/><rect x="1572.72" y="638.90" width="5.40" height="17.74" fill="#F4A568"/><rect x="1572.72" y="656.64" width="5.40" height="28.69" fill="#94DADA"/><rect x="1580.14" y="638.90" width="5.40" height="15.69" fill="#F4A568"/><rect x="1580.14" y="654.59" width="5.40" height="18.10" fill="#94DADA"/><rect x="1587.56" y="638.90" width="5.40" height="4.08" fill="#F9D45C"/><rect x="1587.56" y="642.98" width="5.40" height="57.04" fill="#F4A568"/><rect x="1587.56" y="700.01" width="5.40" height="83.67" fill="#94DADA"/><rect x="1594.98" y="638.90" width="5.40" height="6.81" fill="#88BF4D"/><rect x="1594.98" y="645.71" width="5.40" height="2.05" fill="#F9D45C"/><rect x="1594.98" y="647.76" width="5.40" height="1.37" fill="#509EE3"/><rect x="1594.98" y="649.13" width="5.40" height="80.60" fill="#F4A568"/><rect x="1594.98" y="729.73" width="5.40" height="86.07" fill="#94DADA"/><rect x="1602.40" y="638.90" width="5.40" height="2.71" fill="#509EE3"/><rect x="1602.40" y="641.61" width="5.40" height="67.62" fill="#F4A568"/><rect x="1602.40" y="709.23" width="5.40" height="80.60" fill="#94DADA"/><rect x="1610.07" y="638.90" width="5.40" height="6.81" fill="#F9D45C"/><rect x="1610.07" y="645.71" width="5.40" height="105.53" fill="#F4A568"/><rect x="1610.07" y="751.24" width="5.40" height="75.14" fill="#94DADA"/><rect x="1617.73" y="638.90" width="5.40" height="4.76" fill="#F9D45C"/><rect x="1617.73" y="643.66" width="5.40" height="1.71" fill="#509EE3"/><rect x="1617.73" y="645.37" width="5.40" height="70.01" fill="#F4A568"/><rect x="1617.73" y="715.38" width="5.40" height="61.82" fill="#94DADA"/><rect x="1625.40" y="638.90" width="5.40" height="25.25" fill="#F4A568"/><rect x="1625.40" y="664.15" width="5.40" height="23.57" fill="#94DADA"/><rect x="1633.07" y="638.90" width="5.40" height="21.15" fill="#F4A568"/><rect x="1633.07" y="660.05" width="5.40" height="31.76" fill="#94DADA"/><rect x="1640.73" y="638.90" width="5.40" height="2.71" fill="#509EE3"/><rect x="1640.73" y="641.61" width="5.40" height="76.50" fill="#F4A568"/><rect x="1640.73" y="718.11" width="5.40" height="82.31" fill="#94DADA"/><rect x="1648.40" y="638.90" width="5.40" height="3.40" fill="#F9D45C"/><rect x="1648.40" y="642.30" width="5.40" height="78.21" fill="#F4A568"/><rect x="1648.40" y="720.51" width="5.40" height="83.67" fill="#94DADA"/><rect x="1656.07" y="638.90" width="5.40" height="70.33" fill="#F4A568"/><rect x="1656.07" y="709.23" width="5.40" height="67.96" fill="#94DADA"/><rect x="1663.73" y="638.90" width="5.40" height="132.83" fill="#F4A568"/><rect x="1663.73" y="771.73" width="5.40" height="227.80" fill="#94DADA"/><rect x="1671.40" y="638.90" width="5.40" height="2.71" fill="#509EE3"/><rect x="1671.40" y="641.61" width="5.40" height="78.89" fill="#F4A568"/><rect x="1671.40" y="720.51" width="5.40" height="91.53" fill="#94DADA"/><rect x="1679.07" y="638.90" width="5.40" height="2.71" fill="#509EE3"/><rect x="1679.07" y="641.61" width="5.40" height="43.03" fill="#F4A568"/><rect x="1679.07" y="684.64" width="5.40" height="49.86" fill="#94DADA"/><rect x="1686.73" y="638.90" width="5.40" height="24.57" fill="#F4A568"/><rect x="1686.73" y="663.47" width="5.40" height="38.93" fill="#94DADA"/><rect x="1694.40" y="638.90" width="5.40" height="3.40" fill="#F9D45C"/><rect x="1694.40" y="642.30" width="5.40" height="109.63" fill="#F4A568"/><rect x="1694.40" y="751.93" width="5.40" height="94.26" fill="#94DADA"/><rect x="1702.07" y="638.90" width="5.40" height="3.40" fill="#F9D45C"/><rect x="1702.07" y="642.30" width="5.40" height="2.05" fill="#509EE3"/><rect x="1702.07" y="644.34" width="5.40" height="65.92" fill="#F4A568"/><rect x="1702.07" y="710.26" width="5.40" height="82.65" fill="#94DADA"/><rect x="1709.73" y="638.90" width="5.40" height="67.94" fill="#F4A568"/><rect x="1709.73" y="706.84" width="5.40" height="92.21" fill="#94DADA"/><rect x="1717.40" y="638.90" width="5.40" height="3.40" fill="#509EE3"/><rect x="1717.40" y="642.30" width="5.40" height="80.94" fill="#F4A568"/><rect x="1717.40" y="723.24" width="5.40" height="87.43" fill="#94DADA"/><rect x="1725.07" y="638.90" width="5.40" height="3.40" fill="#F9D45C"/><rect x="1725.07" y="642.30" width="5.40" height="2.05" fill="#509EE3"/><rect x="1725.07" y="644.34" width="5.40" height="67.62" fill="#F4A568"/><rect x="1725.07" y="711.97" width="5.40" height="88.46" fill="#94DADA"/><rect x="1732.73" y="638.90" width="5.40" height="2.71" fill="#509EE3"/><rect x="1732.73" y="641.61" width="5.40" height="32.10" fill="#F4A568"/><rect x="1732.73" y="673.72" width="5.40" height="37.57" fill="#94DADA"/><rect x="1740.40" y="638.90" width="5.40" height="21.15" fill="#F4A568"/><rect x="1740.40" y="660.05" width="5.40" height="23.91" fill="#94DADA"/><rect x="1748.07" y="638.90" width="5.40" height="56.67" fill="#F4A568"/><rect x="1748.07" y="695.57" width="5.40" height="84.02" fill="#94DADA"/><rect x="1755.73" y="638.90" width="5.40" height="3.40" fill="#F9D45C"/><rect x="1755.73" y="642.30" width="5.40" height="90.16" fill="#F4A568"/><rect x="1755.73" y="732.46" width="5.40" height="122.27" fill="#94DADA"/><rect x="1763.40" y="638.90" width="5.40" height="3.40" fill="#F9D45C"/><rect x="1763.40" y="642.30" width="5.40" height="65.57" fill="#F4A568"/><rect x="1763.40" y="707.87" width="5.40" height="113.05" fill="#94DADA"/><rect x="1771.07" y="638.90" width="5.40" height="6.81" fill="#EF8C8C"/><rect x="1771.07" y="645.71" width="5.40" height="34.84" fill="#F4A568"/><rect x="1771.07" y="680.55" width="5.40" height="68.31" fill="#94DADA"/><rect x="1778.73" y="638.90" width="5.40" height="3.40" fill="#EF8C8C"/><rect x="1778.73" y="642.30" width="5.40" height="1.37" fill="#F9D45C"/><rect x="1778.73" y="643.66" width="5.40" height="60.79" fill="#F4A568"/><rect x="1778.73" y="704.45" width="5.40" height="85.38" fill="#94DADA"/><rect x="1786.40" y="638.90" width="5.40" height="12.27" fill="#F4A568"/><rect x="1786.40" y="651.17" width="5.40" height="43.72" fill="#94DADA"/><rect x="1794.07" y="638.90" width="5.40" height="23.55" fill="#F4A568"/><rect x="1794.07" y="662.45" width="5.40" height="29.37" fill="#94DADA"/><rect x="1801.73" y="638.90" width="5.40" height="4.08" fill="#F9D45C"/><rect x="1801.73" y="642.98" width="5.40" height="72.40" fill="#F4A568"/><rect x="1801.73" y="715.38" width="5.40" height="188.52" fill="#94DADA"/><rect x="1809.40" y="638.90" width="5.40" height="8.18" fill="#EF8C8C"/><rect x="1809.40" y="647.08" width="5.40" height="2.05" fill="#509EE3"/><rect x="1809.40" y="649.13" width="5.40" height="47.47" fill="#F4A568"/><rect x="1809.40" y="696.60" width="5.40" height="87.09" fill="#94DADA"/><rect x="1817.07" y="638.90" width="5.40" height="13.30" fill="#EF8C8C"/><rect x="1817.07" y="652.20" width="5.40" height="1.37" fill="#509EE3"/><rect x="1817.07" y="653.57" width="5.40" height="81.63" fill="#F4A568"/><rect x="1817.07" y="735.19" width="5.40" height="92.55" fill="#94DADA"/><rect x="1824.73" y="638.90" width="5.40" height="3.40" fill="#F9D45C"/><rect x="1824.73" y="642.30" width="5.40" height="64.55" fill="#F4A568"/><rect x="1824.73" y="706.84" width="5.40" height="64.89" fill="#94DADA"/><rect x="1832.40" y="638.90" width="5.40" height="2.71" fill="#509EE3"/><rect x="1832.40" y="641.61" width="5.40" height="51.57" fill="#F4A568"/><rect x="1832.40" y="693.18" width="5.40" height="74.80" fill="#94DADA"/><rect x="1839.95" y="638.90" width="5.40" height="25.94" fill="#F4A568"/><rect x="1839.95" y="664.84" width="5.40" height="37.57" fill="#94DADA"/><rect x="1847.50" y="638.90" width="5.40" height="20.13" fill="#F4A568"/><rect x="1847.50" y="659.03" width="5.40" height="36.89" fill="#94DADA"/><rect x="1855.05" y="638.90" width="5.40" height="4.08" fill="#F9D45C"/><rect x="1855.05" y="642.98" width="5.40" height="74.11" fill="#F4A568"/><rect x="1855.05" y="717.09" width="5.40" height="106.56" fill="#94DADA"/><rect x="1862.60" y="638.90" width="5.40" height="3.40" fill="#F9D45C"/><rect x="1862.60" y="642.30" width="5.40" height="92.90" fill="#F4A568"/><rect x="1862.60" y="735.19" width="5.40" height="88.46" fill="#94DADA"/><rect x="1870.15" y="638.90" width="5.40" height="4.08" fill="#F9D45C"/><rect x="1870.15" y="642.98" width="5.40" height="52.94" fill="#F4A568"/><rect x="1870.15" y="695.92" width="5.40" height="82.65" fill="#94DADA"/><rect x="1877.70" y="638.90" width="5.40" height="4.08" fill="#F9D45C"/><rect x="1877.70" y="642.98" width="5.40" height="67.28" fill="#F4A568"/><rect x="1877.70" y="710.26" width="5.40" height="88.80" fill="#94DADA"/><rect x="1885.25" y="638.90" width="5.40" height="4.08" fill="#F9D45C"/><rect x="1885.25" y="642.98" width="5.40" height="66.26" fill="#F4A568"/><rect x="1885.25" y="709.23" width="5.40" height="82.31" fill="#94DADA"/><rect x="1892.80" y="638.90" width="5.40" height="29.35" fill="#F4A568"/><rect x="1892.80" y="668.25" width="5.40" height="45.42" fill="#94DADA"/><rect x="1900.35" y="638.90" width="5.40" height="3.40" fill="#509EE3"/><rect x="1900.35" y="642.30" width="5.40" height="21.86" fill="#F4A568"/><rect x="1900.35" y="664.15" width="5.40" height="43.72" fill="#94DADA"/><rect x="1907.90" y="638.90" width="5.40" height="4.08" fill="#F9D45C"/><rect x="1907.90" y="642.98" width="5.40" height="2.73" fill="#509EE3"/><rect x="1907.90" y="645.71" width="5.40" height="106.22" fill="#F4A568"/><rect x="1907.90" y="751.93" width="5.40" height="100.07" fill="#94DADA"/><rect x="1915.45" y="638.90" width="5.40" height="3.40" fill="#F9D45C"/><rect x="1915.45" y="642.30" width="5.40" height="4.78" fill="#509EE3"/><rect x="1915.45" y="647.08" width="5.40" height="71.04" fill="#F4A568"/><rect x="1915.45" y="718.11" width="5.40" height="91.53" fill="#94DADA"/><rect x="1923.00" y="638.90" width="5.40" height="21.84" fill="#F9D45C"/><rect x="1923.00" y="660.74" width="5.40" height="1.02" fill="#509EE3"/><rect x="1923.00" y="661.76" width="5.40" height="86.07" fill="#F4A568"/><rect x="1923.00" y="747.83" width="5.40" height="91.19" fill="#94DADA"/><rect x="1930.55" y="638.90" width="5.40" height="77.51" fill="#F4A568"/><rect x="1930.55" y="716.41" width="5.40" height="88.11" fill="#94DADA"/><rect x="1938.10" y="638.90" width="5.40" height="5.44" fill="#F9D45C"/><rect x="1938.10" y="644.34" width="5.40" height="1.37" fill="#509EE3"/><rect x="1938.10" y="645.71" width="5.40" height="79.92" fill="#F4A568"/><rect x="1938.10" y="725.63" width="5.40" height="105.87" fill="#94DADA"/><rect x="1945.65" y="638.90" width="5.40" height="37.89" fill="#F4A568"/><rect x="1945.65" y="676.79" width="5.40" height="48.84" fill="#94DADA"/><rect x="1953.20" y="638.90" width="5.40" height="33.79" fill="#F4A568"/><rect x="1953.20" y="672.69" width="5.40" height="42.35" fill="#94DADA"/><rect x="1960.75" y="638.90" width="5.40" height="7.49" fill="#F9D45C"/><rect x="1960.75" y="646.39" width="5.40" height="71.72" fill="#F4A568"/><rect x="1960.75" y="718.11" width="5.40" height="108.27" fill="#94DADA"/><rect x="1968.30" y="638.90" width="5.40" height="13.30" fill="#F9D45C"/><rect x="1968.30" y="652.20" width="5.40" height="1.37" fill="#509EE3"/><rect x="1968.30" y="653.57" width="5.40" height="78.89" fill="#F4A568"/><rect x="1968.30" y="732.46" width="5.40" height="92.55" fill="#94DADA"/><rect x="1975.85" y="638.90" width="5.40" height="79.21" fill="#F4A568"/><rect x="1975.85" y="718.11" width="5.40" height="102.80" fill="#94DADA"/><rect x="1983.40" y="638.90" width="5.40" height="78.19" fill="#F4A568"/><rect x="1983.40" y="717.09" width="5.40" height="79.58" fill="#94DADA"/><rect x="1990.95" y="638.90" width="5.40" height="33.79" fill="#F4A568"/><rect x="1990.95" y="672.69" width="5.40" height="50.20" fill="#94DADA"/></g>
<g id="wm"><g transform="translate(1083,252) scale(1.0)" fill="#B4BCD0" opacity="0.27"><circle cx="0" cy="0" r="10.5"/><ellipse cx="-50.6" cy="-1.0" rx="18.8" ry="8.0" transform="rotate(0 -50.6 -1.0)"/><ellipse cx="-36.2" cy="31.8" rx="20.5" ry="8.3" transform="rotate(-36 -36.2 31.8)"/><ellipse cx="0" cy="42" rx="13.5" ry="7.8" transform="rotate(90 0 42)"/><ellipse cx="-28.4" cy="-28" rx="15" ry="6.6" transform="rotate(36 -28.4 -28)"/><ellipse cx="0" cy="-31.4" rx="9" ry="6" transform="rotate(90 0 -31.4)"/><ellipse cx="22.2" cy="-18.8" rx="7.6" ry="4.8" transform="rotate(-38 22.2 -18.8)"/><ellipse cx="33.2" cy="1.7" rx="7.6" ry="5.3" transform="rotate(0 33.2 1.7)"/><ellipse cx="26.3" cy="24.6" rx="11.8" ry="5.8" transform="rotate(44 26.3 24.6)"/><circle cx="19.5" cy="1" r="3.6"/><circle cx="13.7" cy="-11" r="3.8"/><circle cx="0" cy="-17.8" r="4.2"/><circle cx="-14.7" cy="-13.7" r="4.8"/><circle cx="-21.5" cy="-0.7" r="5.2"/><circle cx="-15.7" cy="13.7" r="4.8"/><circle cx="0" cy="19.8" r="4.2"/><circle cx="14.4" cy="13.7" r="3.8"/><text x="64" y="27.3" font-size="50" textLength="513" lengthAdjust="spacingAndGlyphs" stroke="#B4BCD0" stroke-width="1.6" stroke-linejoin="round">Footprint Analytics</text></g><g transform="translate(297.6,804.3) scale(0.742)" fill="#B4BCD0" opacity="0.27"><circle cx="0" cy="0" r="10.5"/><ellipse cx="-50.6" cy="-1.0" rx="18.8" ry="8.0" transform="rotate(0 -50.6 -1.0)"/><ellipse cx="-36.2" cy="31.8" rx="20.5" ry="8.3" transform="rotate(-36 -36.2 31.8)"/><ellipse cx="0" cy="42" rx="13.5" ry="7.8" transform="rotate(90 0 42)"/><ellipse cx="-28.4" cy="-28" rx="15" ry="6.6" transform="rotate(36 -28.4 -28)"/><ellipse cx="0" cy="-31.4" rx="9" ry="6" transform="rotate(90 0 -31.4)"/><ellipse cx="22.2" cy="-18.8" rx="7.6" ry="4.8" transform="rotate(-38 22.2 -18.8)"/><ellipse cx="33.2" cy="1.7" rx="7.6" ry="5.3" transform="rotate(0 33.2 1.7)"/><ellipse cx="26.3" cy="24.6" rx="11.8" ry="5.8" transform="rotate(44 26.3 24.6)"/><circle cx="19.5" cy="1" r="3.6"/><circle cx="13.7" cy="-11" r="3.8"/><circle cx="0" cy="-17.8" r="4.2"/><circle cx="-14.7" cy="-13.7" r="4.8"/><circle cx="-21.5" cy="-0.7" r="5.2"/><circle cx="-15.7" cy="13.7" r="4.8"/><circle cx="0" cy="19.8" r="4.2"/><circle cx="14.4" cy="13.7" r="3.8"/><text x="64" y="27.3" font-size="50" textLength="513" lengthAdjust="spacingAndGlyphs" stroke="#B4BCD0" stroke-width="1.6" stroke-linejoin="round">Footprint Analytics</text></g><g transform="translate(1319.8,805.3) scale(0.744)" fill="#B4BCD0" opacity="0.27"><circle cx="0" cy="0" r="10.5"/><ellipse cx="-50.6" cy="-1.0" rx="18.8" ry="8.0" transform="rotate(0 -50.6 -1.0)"/><ellipse cx="-36.2" cy="31.8" rx="20.5" ry="8.3" transform="rotate(-36 -36.2 31.8)"/><ellipse cx="0" cy="42" rx="13.5" ry="7.8" transform="rotate(90 0 42)"/><ellipse cx="-28.4" cy="-28" rx="15" ry="6.6" transform="rotate(36 -28.4 -28)"/><ellipse cx="0" cy="-31.4" rx="9" ry="6" transform="rotate(90 0 -31.4)"/><ellipse cx="22.2" cy="-18.8" rx="7.6" ry="4.8" transform="rotate(-38 22.2 -18.8)"/><ellipse cx="33.2" cy="1.7" rx="7.6" ry="5.3" transform="rotate(0 33.2 1.7)"/><ellipse cx="26.3" cy="24.6" rx="11.8" ry="5.8" transform="rotate(44 26.3 24.6)"/><circle cx="19.5" cy="1" r="3.6"/><circle cx="13.7" cy="-11" r="3.8"/><circle cx="0" cy="-17.8" r="4.2"/><circle cx="-14.7" cy="-13.7" r="4.8"/><circle cx="-21.5" cy="-0.7" r="5.2"/><circle cx="-15.7" cy="13.7" r="4.8"/><circle cx="0" cy="19.8" r="4.2"/><circle cx="14.4" cy="13.7" r="3.8"/><text x="64" y="27.3" font-size="50" textLength="513" lengthAdjust="spacingAndGlyphs" stroke="#B4BCD0" stroke-width="1.6" stroke-linejoin="round">Footprint Analytics</text></g><g transform="translate(194.8,256.5) scale(0.47)" fill="#B4BCD0" opacity="0.2"><circle cx="0" cy="0" r="10.5"/><ellipse cx="-50.6" cy="-1.0" rx="18.8" ry="8.0" transform="rotate(0 -50.6 -1.0)"/><ellipse cx="-36.2" cy="31.8" rx="20.5" ry="8.3" transform="rotate(-36 -36.2 31.8)"/><ellipse cx="0" cy="42" rx="13.5" ry="7.8" transform="rotate(90 0 42)"/><ellipse cx="-28.4" cy="-28" rx="15" ry="6.6" transform="rotate(36 -28.4 -28)"/><ellipse cx="0" cy="-31.4" rx="9" ry="6" transform="rotate(90 0 -31.4)"/><ellipse cx="22.2" cy="-18.8" rx="7.6" ry="4.8" transform="rotate(-38 22.2 -18.8)"/><ellipse cx="33.2" cy="1.7" rx="7.6" ry="5.3" transform="rotate(0 33.2 1.7)"/><ellipse cx="26.3" cy="24.6" rx="11.8" ry="5.8" transform="rotate(44 26.3 24.6)"/><circle cx="19.5" cy="1" r="3.6"/><circle cx="13.7" cy="-11" r="3.8"/><circle cx="0" cy="-17.8" r="4.2"/><circle cx="-14.7" cy="-13.7" r="4.8"/><circle cx="-21.5" cy="-0.7" r="5.2"/><circle cx="-15.7" cy="13.7" r="4.8"/><circle cx="0" cy="19.8" r="4.2"/><circle cx="14.4" cy="13.7" r="3.8"/><text x="64" y="27.3" font-size="50" textLength="513" lengthAdjust="spacingAndGlyphs" stroke="#B4BCD0" stroke-width="1.6" stroke-linejoin="round">Footprint Analytics</text></g></g>
<g id="labels"><text x="875" y="142.1" font-size="15.4" text-anchor="end" fill="#E9EBF1">$200,000,000.00</text><text x="875" y="189.4" font-size="15.4" text-anchor="end" fill="#E9EBF1">$0</text><text x="875" y="236.7" font-size="15.4" text-anchor="end" fill="#E9EBF1">-$200,000,000.00</text><text x="875" y="284.0" font-size="15.4" text-anchor="end" fill="#E9EBF1">-$400,000,000.00</text><text x="875" y="331.3" font-size="15.4" text-anchor="end" fill="#E9EBF1">-$600,000,000.00</text><text x="875" y="378.6" font-size="15.4" text-anchor="end" fill="#E9EBF1">-$800,000,000.00</text><text x="875" y="425.9" font-size="15.4" text-anchor="end" fill="#E9EBF1">-$1,000,000,000.00</text><text x="982.3" y="473" font-size="15.4" text-anchor="middle" fill="#E9EBF1">October 1, 2023</text><text x="1356.3" y="473" font-size="15.4" text-anchor="middle" fill="#E9EBF1">November 1, 2023</text><text x="1730.3" y="473" font-size="15.4" text-anchor="middle" fill="#E9EBF1">December 1, 2023</text><text x="1442" y="503.5" font-size="18" text-anchor="middle" fill="#E9EBF1">block_date</text><text transform="translate(731.5,286) rotate(-90)" font-size="18" text-anchor="middle" fill="#E9EBF1">Net Value</text><text x="277" y="1004.3" font-size="15.4" text-anchor="end" fill="#E9EBF1">$0</text><text x="277" y="975.0" font-size="15.4" text-anchor="end" fill="#E9EBF1">$200,000,000.00</text><text x="277" y="945.8" font-size="15.4" text-anchor="end" fill="#E9EBF1">$400,000,000.00</text><text x="277" y="916.5" font-size="15.4" text-anchor="end" fill="#E9EBF1">$600,000,000.00</text><text x="277" y="887.2" font-size="15.4" text-anchor="end" fill="#E9EBF1">$800,000,000.00</text><text x="277" y="857.9" font-size="15.4" text-anchor="end" fill="#E9EBF1">$1,000,000,000.00</text><text x="277" y="828.7" font-size="15.4" text-anchor="end" fill="#E9EBF1">$1,200,000,000.00</text><text x="277" y="799.4" font-size="15.4" text-anchor="end" fill="#E9EBF1">$1,400,000,000.00</text><text x="277" y="770.1" font-size="15.4" text-anchor="end" fill="#E9EBF1">$1,600,000,000.00</text><text x="277" y="740.9" font-size="15.4" text-anchor="end" fill="#E9EBF1">$1,800,000,000.00</text><text x="277" y="711.6" font-size="15.4" text-anchor="end" fill="#E9EBF1">$2,000,000,000.00</text><text x="277" y="682.3" font-size="15.4" text-anchor="end" fill="#E9EBF1">$2,200,000,000.00</text><text x="277" y="653.1" font-size="15.4" text-anchor="end" fill="#E9EBF1">$2,400,000,000.00</text><text x="347.5" y="1022.8" font-size="15.4" text-anchor="middle" fill="#E9EBF1">October 1, 2023</text><text x="579.5" y="1022.8" font-size="15.4" text-anchor="middle" fill="#E9EBF1">November 1, 2023</text><text x="811.5" y="1022.8" font-size="15.4" text-anchor="middle" fill="#E9EBF1">December 1, 2023</text><text x="632" y="1053.5" font-size="18" text-anchor="middle" fill="#E9EBF1">block_date</text><text transform="translate(137.5,820) rotate(-90)" font-size="18" text-anchor="middle" fill="#E9EBF1">In Value</text><text x="1305" y="644.2" font-size="15.4" text-anchor="end" fill="#E9EBF1">$0</text><text x="1305" y="696.0" font-size="15.4" text-anchor="end" fill="#E9EBF1">-$500,000,000.00</text><text x="1305" y="747.9" font-size="15.4" text-anchor="end" fill="#E9EBF1">-$1,000,000,000.00</text><text x="1305" y="799.8" font-size="15.4" text-anchor="end" fill="#E9EBF1">-$1,500,000,000.00</text><text x="1305" y="851.6" font-size="15.4" text-anchor="end" fill="#E9EBF1">-$2,000,000,000.00</text><text x="1305" y="903.4" font-size="15.4" text-anchor="end" fill="#E9EBF1">-$2,500,000,000.00</text><text x="1305" y="955.3" font-size="15.4" text-anchor="end" fill="#E9EBF1">-$3,000,000,000.00</text><text x="1375.1" y="1022.8" font-size="15.4" text-anchor="middle" fill="#E9EBF1">October 1, 2023</text><text x="1605.1" y="1022.8" font-size="15.4" text-anchor="middle" fill="#E9EBF1">November 1, 2023</text><text x="1835.1" y="1022.8" font-size="15.4" text-anchor="middle" fill="#E9EBF1">December 1, 2023</text><text x="1657" y="1053.5" font-size="18" text-anchor="middle" fill="#E9EBF1">block_date</text><text transform="translate(1161,820) rotate(-90)" font-size="18" text-anchor="middle" fill="#E9EBF1">Out value</text><text x="30" y="51.5" font-size="18" text-anchor="start" fill="#E9EBF1">CEXs Holding Stable-coin List</text><text x="711.5" y="51.5" font-size="18" text-anchor="start" fill="#E9EBF1">Stablecoin Exchange Net Flow : Per Coin</text><text x="30" y="601.5" font-size="18" text-anchor="start" fill="#E9EBF1">Stablecoin Exchange Inflow : Per Coin</text><text x="1052.8" y="601.5" font-size="18" text-anchor="start" fill="#E9EBF1">Stablecoin Exchange Outflow : Per Coin</text><circle cx="719.2" cy="79.5" r="7.9" fill="#94DADA"/><text x="737.5" y="86.5" font-size="18" text-anchor="start" fill="#E9EBF1">USDT</text><circle cx="809.5" cy="79.5" r="7.9" fill="#F4A568"/><text x="828.4" y="86.5" font-size="18" text-anchor="start" fill="#E9EBF1">USDC</text><circle cx="902.5" cy="79.5" r="7.9" fill="#EF8C8C"/><text x="920.7" y="86.5" font-size="18" text-anchor="start" fill="#E9EBF1">TUSD</text><circle cx="992.8" cy="79.5" r="7.9" fill="#88BF4D"/><text x="1011" y="86.5" font-size="18" text-anchor="start" fill="#E9EBF1">USDP</text><circle cx="1084.4" cy="79.5" r="7.9" fill="#509EE3"/><text x="1102.7" y="86.5" font-size="18" text-anchor="start" fill="#E9EBF1">DAI</text><circle cx="1157.1" cy="79.5" r="7.9" fill="#F9D45C"/><text x="1175.4" y="86.5" font-size="18" text-anchor="start" fill="#E9EBF1">BUSD</text><circle cx="1249.1" cy="79.5" r="7.9" fill="#3A35C0"/><text x="1267.7" y="86.5" font-size="18" text-anchor="start" fill="#E9EBF1">GUSD</text><circle cx="1342.4" cy="79.5" r="7.9" fill="#A989C5"/><text x="1361.5" y="86.5" font-size="18" text-anchor="start" fill="#E9EBF1">LUSD</text><circle cx="37.3" cy="629.7" r="7.9" fill="#94DADA"/><text x="56" y="637.2" font-size="18" text-anchor="start" fill="#E9EBF1">USDT</text><circle cx="37.3" cy="662.7" r="7.9" fill="#F4A568"/><text x="56" y="670.2" font-size="18" text-anchor="start" fill="#E9EBF1">USDC</text><circle cx="37.3" cy="695.5" r="7.9" fill="#509EE3"/><text x="56" y="703.0" font-size="18" text-anchor="start" fill="#E9EBF1">DAI</text><circle cx="37.3" cy="729.0" r="7.9" fill="#EF8C8C"/><text x="56" y="736.5" font-size="18" text-anchor="start" fill="#E9EBF1">TUSD</text><circle cx="37.3" cy="762.0" r="7.9" fill="#F9D45C"/><text x="56" y="769.5" font-size="18" text-anchor="start" fill="#E9EBF1">BUSD</text><circle cx="37.3" cy="794.5" r="7.9" fill="#88BF4D"/><text x="56" y="802.0" font-size="18" text-anchor="start" fill="#E9EBF1">USDP</text><circle cx="37.3" cy="827.3" r="7.9" fill="#3A35C0"/><text x="56" y="834.8" font-size="18" text-anchor="start" fill="#E9EBF1">GUSD</text><circle cx="37.3" cy="860.1" r="7.9" fill="#A989C5"/><text x="56" y="867.6" font-size="18" text-anchor="start" fill="#E9EBF1">LUSD</text><circle cx="1060" cy="629.7" r="7.9" fill="#3A35C0"/><text x="1078.5" y="637.2" font-size="18" text-anchor="start" fill="#E9EBF1">GUSD</text><circle cx="1060" cy="662.7" r="7.9" fill="#A989C5"/><text x="1078.5" y="670.2" font-size="18" text-anchor="start" fill="#E9EBF1">LUSD</text><circle cx="1060" cy="695.5" r="7.9" fill="#EF8C8C"/><text x="1078.5" y="703.0" font-size="18" text-anchor="start" fill="#E9EBF1">TUSD</text><circle cx="1060" cy="729.0" r="7.9" fill="#88BF4D"/><text x="1078.5" y="736.5" font-size="18" text-anchor="start" fill="#E9EBF1">USDP</text><circle cx="1060" cy="762.0" r="7.9" fill="#F9D45C"/><text x="1078.5" y="769.5" font-size="18" text-anchor="start" fill="#E9EBF1">BUSD</text><circle cx="1060" cy="794.5" r="7.9" fill="#509EE3"/><text x="1078.5" y="802.0" font-size="18" text-anchor="start" fill="#E9EBF1">DAI</text><circle cx="1060" cy="827.3" r="7.9" fill="#F4A568"/><text x="1078.5" y="834.8" font-size="18" text-anchor="start" fill="#E9EBF1">USDC</text><circle cx="1060" cy="860.1" r="7.9" fill="#94DADA"/><text x="1078.5" y="867.6" font-size="18" text-anchor="start" fill="#E9EBF1">USDT</text><g fill="#B3B8C9"><path d="M589,15.3 h8 v7.8 h4.9 l-8.9,8.2 l-8.9,-8.2 h4.9 z"/><rect x="583.9" y="33.1" width="18.2" height="2.8"/></g><g><rect x="631.2" y="15.3" width="16.8" height="15.6" rx="1.6" fill="#B3B8C9"/><rect x="635.4" y="28.6" width="8.4" height="4.4" fill="#182035"/><rect x="636.7" y="29.8" width="5.8" height="3.4" fill="#B3B8C9"/><path d="M634.3000000000001,32.7 h10.6 l-5.3,3.6 z" fill="#B3B8C9"/><text x="639.6" y="25.8" font-size="8.3" text-anchor="middle" fill="#182035">API</text></g><g fill="#B3B8C9"><path d="M1951,15.3 h8 v7.8 h4.9 l-8.9,8.2 l-8.9,-8.2 h4.9 z"/><rect x="1945.9" y="33.1" width="18.2" height="2.8"/></g><g><rect x="1993.1999999999998" y="15.3" width="16.8" height="15.6" rx="1.6" fill="#B3B8C9"/><rect x="1997.3999999999999" y="28.6" width="8.4" height="4.4" fill="#182035"/><rect x="1998.6999999999998" y="29.8" width="5.8" height="3.4" fill="#B3B8C9"/><path d="M1996.3,32.7 h10.6 l-5.3,3.6 z" fill="#B3B8C9"/><text x="2001.6" y="25.8" font-size="8.3" text-anchor="middle" fill="#182035">API</text></g><g fill="#B3B8C9"><path d="M930,565.3 h8 v7.8 h4.9 l-8.9,8.2 l-8.9,-8.2 h4.9 z"/><rect x="924.9" y="583.0999999999999" width="18.2" height="2.8"/></g><g><rect x="972.2" y="565.3" width="16.8" height="15.6" rx="1.6" fill="#B3B8C9"/><rect x="976.4" y="578.5999999999999" width="8.4" height="4.4" fill="#182035"/><rect x="977.7" y="579.8" width="5.8" height="3.4" fill="#B3B8C9"/><path d="M975.3000000000001,582.6999999999999 h10.6 l-5.3,3.6 z" fill="#B3B8C9"/><text x="980.6" y="575.8" font-size="8.3" text-anchor="middle" fill="#182035">API</text></g><g fill="#B3B8C9"><path d="M1952,565.3 h8 v7.8 h4.9 l-8.9,8.2 l-8.9,-8.2 h4.9 z"/><rect x="1946.9" y="583.0999999999999" width="18.2" height="2.8"/></g><g><rect x="1994.1999999999998" y="565.3" width="16.8" height="15.6" rx="1.6" fill="#B3B8C9"/><rect x="1998.3999999999999" y="578.5999999999999" width="8.4" height="4.4" fill="#182035"/><rect x="1999.6999999999998" y="579.8" width="5.8" height="3.4" fill="#B3B8C9"/><path d="M1997.3,582.6999999999999 h10.6 l-5.3,3.6 z" fill="#B3B8C9"/><text x="2002.6" y="575.8" font-size="8.3" text-anchor="middle" fill="#182035">API</text></g></g>
</svg>
</body></html>
